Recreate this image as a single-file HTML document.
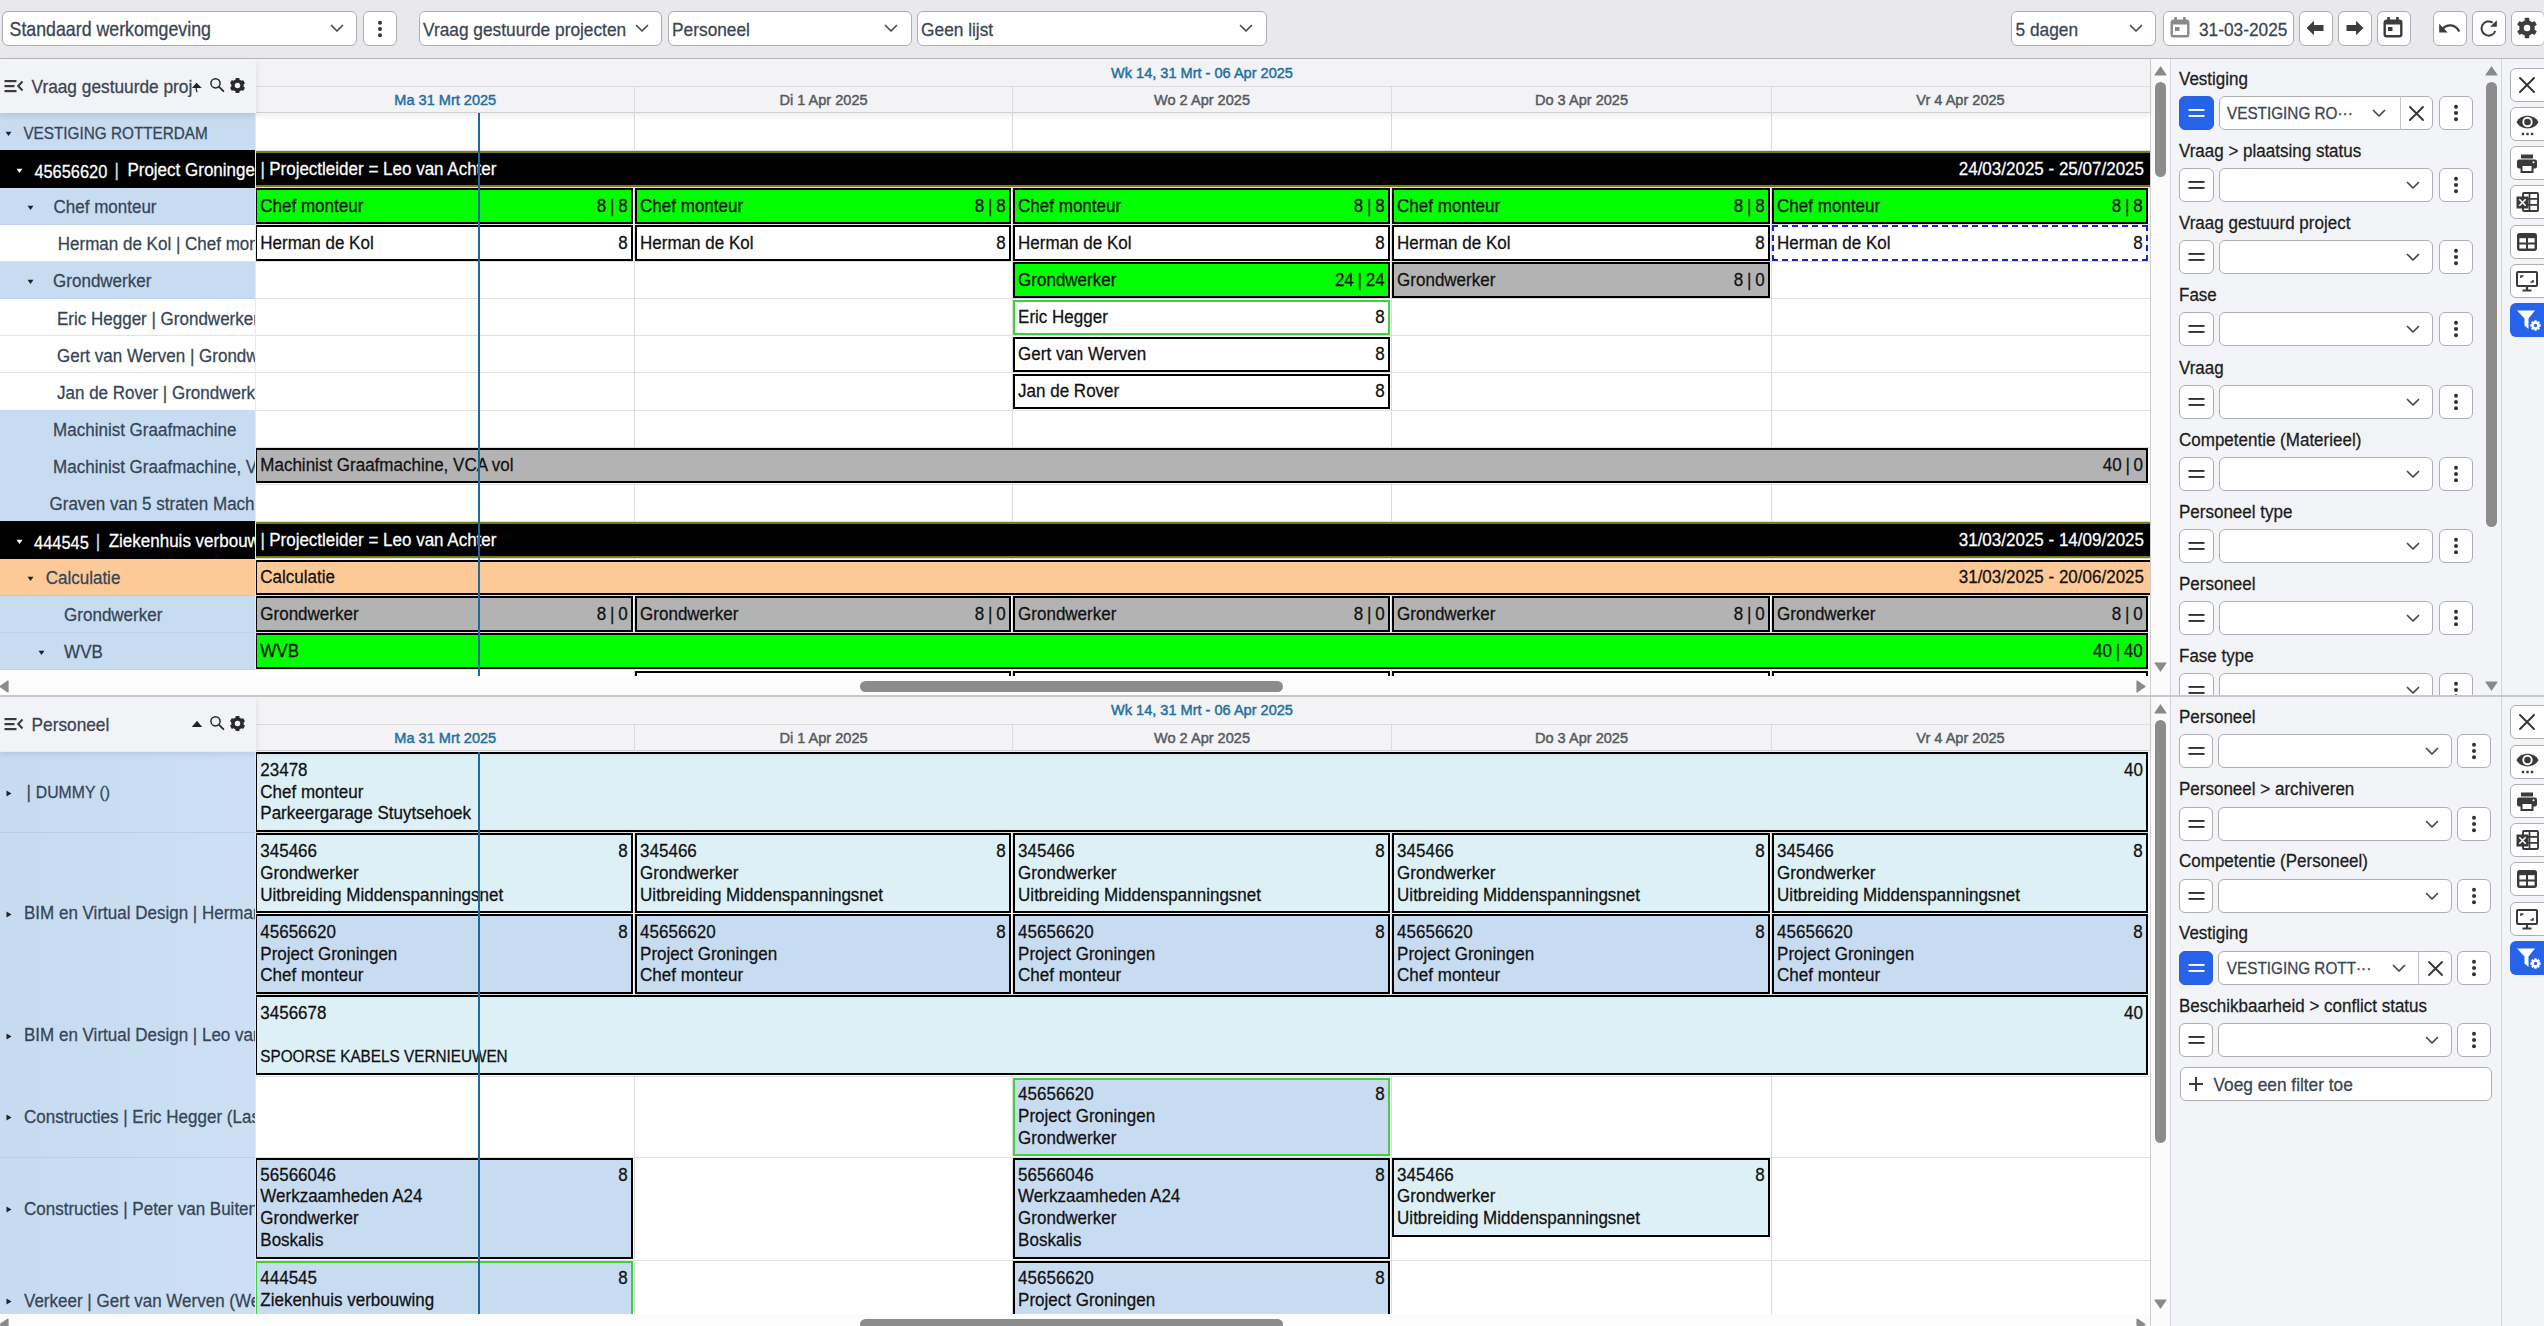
<!DOCTYPE html><html><head><meta charset="utf-8"><style>
html,body{margin:0;padding:0;width:2544px;height:1326px;overflow:hidden;background:#f3f4f7;font-family:"Liberation Sans",sans-serif;}
div{box-sizing:border-box;-webkit-text-stroke:0.25px currentColor}
</style></head><body><div style="position:relative;width:2544px;height:1326px;overflow:hidden">
<div style="position:absolute;left:0.00px;top:0.00px;width:2544.00px;height:58.80px;background:#e8e8ed;border-bottom:1px solid #b8b8bc"></div>
<div style="position:absolute;left:2.00px;top:11.20px;width:355.00px;height:34.40px;background:#fff;border:1px solid #aeaeb2;border-radius:6px;"></div><div style="position:absolute;left:9.60px;top:16.70px;height:24px;line-height:24px;font-size:17.75px;color:#3a4452;font-weight:normal;white-space:nowrap;transform:scaleY(1.09);">Standaard werkomgeving</div><svg style="position:absolute;left:329.50px;top:24.00px;" width="14" height="9" viewBox="0 0 14 9"><polyline points="1.5,1.5 7,7 12.5,1.5" fill="none" stroke="#4a4a4a" stroke-width="1.7" stroke-linecap="round" stroke-linejoin="round"/></svg>
<div style="position:absolute;left:362.50px;top:11.20px;width:34.00px;height:34.40px;background:#fff;border:1px solid #aeaeb2;border-radius:6px;"></div>
<svg style="position:absolute;left:376.50px;top:19.50px;" width="6" height="18" viewBox="0 0 6 18"><circle cx="3" cy="2.8" r="2.0" fill="#333"/><circle cx="3" cy="9" r="2.0" fill="#333"/><circle cx="3" cy="15.2" r="2.0" fill="#333"/></svg>
<div style="position:absolute;left:418.50px;top:11.20px;width:243.50px;height:34.40px;background:#fff;border:1px solid #aeaeb2;border-radius:6px;"></div><div style="position:absolute;left:423.10px;top:16.70px;height:24px;line-height:24px;font-size:17.3px;color:#3a4452;font-weight:normal;white-space:nowrap;transform:scaleY(1.09);">Vraag gestuurde projecten</div><svg style="position:absolute;left:635.00px;top:24.00px;" width="14" height="9" viewBox="0 0 14 9"><polyline points="1.5,1.5 7,7 12.5,1.5" fill="none" stroke="#4a4a4a" stroke-width="1.7" stroke-linecap="round" stroke-linejoin="round"/></svg>
<div style="position:absolute;left:667.50px;top:11.20px;width:244.00px;height:34.40px;background:#fff;border:1px solid #aeaeb2;border-radius:6px;"></div><div style="position:absolute;left:672.10px;top:16.70px;height:24px;line-height:24px;font-size:17.3px;color:#3a4452;font-weight:normal;white-space:nowrap;transform:scaleY(1.09);">Personeel</div><svg style="position:absolute;left:884.00px;top:24.00px;" width="14" height="9" viewBox="0 0 14 9"><polyline points="1.5,1.5 7,7 12.5,1.5" fill="none" stroke="#4a4a4a" stroke-width="1.7" stroke-linecap="round" stroke-linejoin="round"/></svg>
<div style="position:absolute;left:916.50px;top:11.20px;width:350.00px;height:34.40px;background:#fff;border:1px solid #aeaeb2;border-radius:6px;"></div><div style="position:absolute;left:921.10px;top:16.70px;height:24px;line-height:24px;font-size:17.3px;color:#3a4452;font-weight:normal;white-space:nowrap;transform:scaleY(1.09);">Geen lijst</div><svg style="position:absolute;left:1238.50px;top:24.00px;" width="14" height="9" viewBox="0 0 14 9"><polyline points="1.5,1.5 7,7 12.5,1.5" fill="none" stroke="#4a4a4a" stroke-width="1.7" stroke-linecap="round" stroke-linejoin="round"/></svg>
<div style="position:absolute;left:2011.00px;top:11.20px;width:145.00px;height:34.40px;background:#fff;border:1px solid #aeaeb2;border-radius:6px;"></div><div style="position:absolute;left:2015.60px;top:16.70px;height:24px;line-height:24px;font-size:17.3px;color:#3a4452;font-weight:normal;white-space:nowrap;transform:scaleY(1.09);">5 dagen</div><svg style="position:absolute;left:2128.50px;top:24.00px;" width="14" height="9" viewBox="0 0 14 9"><polyline points="1.5,1.5 7,7 12.5,1.5" fill="none" stroke="#4a4a4a" stroke-width="1.7" stroke-linecap="round" stroke-linejoin="round"/></svg>
<div style="position:absolute;left:2162.50px;top:11.20px;width:131.00px;height:34.40px;background:#fff;border:1px solid #aeaeb2;border-radius:6px;"></div>
<svg style="position:absolute;left:2170.00px;top:16.00px;" width="21" height="22" viewBox="0 0 21 22"><rect x="1.7" y="4.7" width="16.6" height="15.6" rx="2" fill="none" stroke="#8a8a8a" stroke-width="2.4"/><rect x="1.5" y="4.5" width="17" height="4" fill="#8a8a8a"/><rect x="4.3" y="1" width="2.6" height="4" fill="#8a8a8a"/><rect x="13.1" y="1" width="2.6" height="4" fill="#8a8a8a"/><rect x="5" y="11" width="4.5" height="4" fill="#8a8a8a"/></svg>
<div style="position:absolute;left:2199.00px;top:16.70px;height:24px;line-height:24px;font-size:17.3px;color:#3a4452;font-weight:normal;white-space:nowrap;transform:scaleY(1.09);">31-03-2025</div>
<div style="position:absolute;left:2298.50px;top:11.20px;width:34.00px;height:34.40px;background:#fff;border:1px solid #aeaeb2;border-radius:6px;"></div>
<div style="position:absolute;left:2337.50px;top:11.20px;width:34.00px;height:34.40px;background:#fff;border:1px solid #aeaeb2;border-radius:6px;"></div>
<div style="position:absolute;left:2376.50px;top:11.20px;width:34.00px;height:34.40px;background:#fff;border:1px solid #aeaeb2;border-radius:6px;"></div>
<div style="position:absolute;left:2432.50px;top:11.20px;width:34.00px;height:34.40px;background:#fff;border:1px solid #aeaeb2;border-radius:6px;"></div>
<div style="position:absolute;left:2471.50px;top:11.20px;width:34.00px;height:34.40px;background:#fff;border:1px solid #aeaeb2;border-radius:6px;"></div>
<div style="position:absolute;left:2510.50px;top:11.20px;width:34.00px;height:34.40px;background:#fff;border:1px solid #aeaeb2;border-radius:6px;"></div>
<svg style="position:absolute;left:2306.00px;top:20.00px;" width="18" height="16" viewBox="0 0 18 16"><path d="M0.5,8 L8,0.8 L8,5 L17.5,5 L17.5,11 L8,11 L8,15.2 Z" fill="#3d3d3d"/></svg>
<svg style="position:absolute;left:2346.00px;top:20.00px;" width="18" height="16" viewBox="0 0 18 16"><path d="M17.5,8 L10,0.8 L10,5 L0.5,5 L0.5,11 L10,11 L10,15.2 Z" fill="#3d3d3d"/></svg>
<svg style="position:absolute;left:2383.00px;top:16.00px;" width="21" height="22" viewBox="0 0 21 22"><rect x="1.7" y="4.7" width="16.6" height="15.6" rx="2" fill="none" stroke="#3d3d3d" stroke-width="2.4"/><rect x="1.5" y="4.5" width="17" height="4" fill="#3d3d3d"/><rect x="4.3" y="1" width="2.6" height="4" fill="#3d3d3d"/><rect x="13.1" y="1" width="2.6" height="4" fill="#3d3d3d"/><rect x="5" y="11" width="4.5" height="4" fill="#3d3d3d"/></svg>
<svg style="position:absolute;left:2436.00px;top:18.00px;" width="26" height="18" viewBox="0 0 26 18"><path d="M6.5,10.8 C10.5,6.2 19,5.5 23.3,13.5" fill="none" stroke="#3d3d3d" stroke-width="2.2"/><path d="M3.2,5.7 L3.2,14.6 L11.7,14.6 Z" fill="#3d3d3d"/></svg>
<svg style="position:absolute;left:2478.00px;top:17.00px;" width="22" height="22" viewBox="0 0 22 22"><path d="M17.3,14.0 A7.1,7.1 0 1 1 14.6,5.6" fill="none" stroke="#3d3d3d" stroke-width="2.0"/><path d="M18.8,3.3 L18.8,9.8 L12.1,9.8 Z" fill="#3d3d3d"/></svg>
<svg style="position:absolute;left:2515.30px;top:16.40px;" width="24" height="24" viewBox="0 0 24 24"><rect x="9.76" y="1.80" width="4.49" height="20.40" rx="0.82" fill="#3d3d3d" transform="rotate(0 12.00 12.00)"/><rect x="9.76" y="1.80" width="4.49" height="20.40" rx="0.82" fill="#3d3d3d" transform="rotate(60 12.00 12.00)"/><rect x="9.76" y="1.80" width="4.49" height="20.40" rx="0.82" fill="#3d3d3d" transform="rotate(120 12.00 12.00)"/><circle cx="12.00" cy="12.00" r="7.75" fill="#3d3d3d"/><circle cx="12.00" cy="12.00" r="3.26" fill="#fff"/></svg>
<div style="position:absolute;left:0.00px;top:58.50px;width:2544.00px;height:637.90px;background:#fff"></div>
<div style="position:absolute;left:0.00px;top:113.30px;width:255.20px;height:557.10px;overflow:hidden;z-index:2"><div style="position:absolute;left:0.00px;top:-113.30px;width:2544px;height:1326px"><div style="position:absolute;left:0.00px;top:113.30px;width:255.50px;height:37.60px;background:#c7dcf1;border-bottom:1px solid #bcd2e8"></div><svg style="position:absolute;left:5.30px;top:131.05px;" width="7" height="6" viewBox="0 0 7 6"><polygon points="0.5,0.8 6.5,0.8 3.5,5" fill="#222"/></svg><div style="position:absolute;left:23.40px;top:122.05px;height:24px;line-height:24px;font-size:15.3px;color:#354556;font-weight:normal;white-space:nowrap;transform:scaleY(1.09);">VESTIGING ROTTERDAM</div><div style="position:absolute;left:0.00px;top:150.40px;width:255.50px;height:37.60px;background:#000;border-bottom:1px solid #000"></div><svg style="position:absolute;left:15.80px;top:168.15px;" width="7" height="6" viewBox="0 0 7 6"><polygon points="0.5,0.8 6.5,0.8 3.5,5" fill="#fff"/></svg><div style="position:absolute;left:34.40px;top:159.15px;height:24px;line-height:24px;font-size:16.4px;color:#fff;font-weight:normal;white-space:nowrap;transform:scaleY(1.09);">45656620</div><div style="position:absolute;left:114.50px;top:159.15px;height:24px;line-height:24px;font-size:17px;color:#cfe9e9;font-weight:normal;white-space:nowrap;transform:scaleY(1.09);">|</div><div style="position:absolute;left:127.40px;top:159.15px;height:24px;line-height:24px;font-size:17px;color:#fff;font-weight:normal;white-space:nowrap;transform:scaleY(1.09);">Project Groningen</div><div style="position:absolute;left:0.00px;top:187.50px;width:255.50px;height:37.60px;background:#c7dcf1;border-bottom:1px solid #bcd2e8"></div><svg style="position:absolute;left:26.80px;top:205.25px;" width="7" height="6" viewBox="0 0 7 6"><polygon points="0.5,0.8 6.5,0.8 3.5,5" fill="#222"/></svg><div style="position:absolute;left:53.50px;top:196.25px;height:24px;line-height:24px;font-size:17px;color:#354556;font-weight:normal;white-space:nowrap;transform:scaleY(1.09);">Chef monteur</div><div style="position:absolute;left:0.00px;top:224.60px;width:255.50px;height:37.60px;background:#fff;border-bottom:1px solid #e2e2e2"></div><div style="position:absolute;left:57.80px;top:233.35px;height:24px;line-height:24px;font-size:17px;color:#354556;font-weight:normal;white-space:nowrap;transform:scaleY(1.09);">Herman de Kol | Chef monteur</div><div style="position:absolute;left:0.00px;top:261.70px;width:255.50px;height:37.60px;background:#c7dcf1;border-bottom:1px solid #bcd2e8"></div><svg style="position:absolute;left:26.80px;top:279.45px;" width="7" height="6" viewBox="0 0 7 6"><polygon points="0.5,0.8 6.5,0.8 3.5,5" fill="#222"/></svg><div style="position:absolute;left:53.10px;top:270.45px;height:24px;line-height:24px;font-size:17px;color:#354556;font-weight:normal;white-space:nowrap;transform:scaleY(1.09);">Grondwerker</div><div style="position:absolute;left:0.00px;top:298.80px;width:255.50px;height:37.60px;background:#fff;border-bottom:1px solid #e2e2e2"></div><div style="position:absolute;left:57.00px;top:307.55px;height:24px;line-height:24px;font-size:17px;color:#354556;font-weight:normal;white-space:nowrap;transform:scaleY(1.09);">Eric Hegger | Grondwerker</div><div style="position:absolute;left:0.00px;top:335.90px;width:255.50px;height:37.60px;background:#fff;border-bottom:1px solid #e2e2e2"></div><div style="position:absolute;left:57.00px;top:344.65px;height:24px;line-height:24px;font-size:17px;color:#354556;font-weight:normal;white-space:nowrap;transform:scaleY(1.09);">Gert van Werven | Grondwerker</div><div style="position:absolute;left:0.00px;top:373.00px;width:255.50px;height:37.60px;background:#fff;border-bottom:1px solid #e2e2e2"></div><div style="position:absolute;left:57.00px;top:381.75px;height:24px;line-height:24px;font-size:17px;color:#354556;font-weight:normal;white-space:nowrap;transform:scaleY(1.09);">Jan de Rover | Grondwerker</div><div style="position:absolute;left:0.00px;top:410.10px;width:255.50px;height:37.60px;background:#c7dcf1;border-bottom:1px solid #bcd2e8"></div><div style="position:absolute;left:53.10px;top:418.85px;height:24px;line-height:24px;font-size:17px;color:#354556;font-weight:normal;white-space:nowrap;transform:scaleY(1.09);">Machinist Graafmachine</div><div style="position:absolute;left:0.00px;top:447.20px;width:255.50px;height:37.60px;background:#c7dcf1;border-bottom:1px solid #bcd2e8"></div><div style="position:absolute;left:53.10px;top:455.95px;height:24px;line-height:24px;font-size:17px;color:#354556;font-weight:normal;white-space:nowrap;transform:scaleY(1.09);">Machinist Graafmachine, VCA vol</div><div style="position:absolute;left:0.00px;top:484.30px;width:255.50px;height:37.60px;background:#c7dcf1;border-bottom:1px solid #bcd2e8"></div><div style="position:absolute;left:49.50px;top:493.05px;height:24px;line-height:24px;font-size:17px;color:#354556;font-weight:normal;white-space:nowrap;transform:scaleY(1.09);">Graven van 5 straten Machinist</div><div style="position:absolute;left:0.00px;top:521.40px;width:255.50px;height:37.60px;background:#000;border-bottom:1px solid #000"></div><svg style="position:absolute;left:16.00px;top:539.15px;" width="7" height="6" viewBox="0 0 7 6"><polygon points="0.5,0.8 6.5,0.8 3.5,5" fill="#fff"/></svg><div style="position:absolute;left:34.10px;top:530.15px;height:24px;line-height:24px;font-size:16.4px;color:#fff;font-weight:normal;white-space:nowrap;transform:scaleY(1.09);">444545</div><div style="position:absolute;left:95.80px;top:530.15px;height:24px;line-height:24px;font-size:17px;color:#cfe9e9;font-weight:normal;white-space:nowrap;transform:scaleY(1.09);">|</div><div style="position:absolute;left:108.70px;top:530.15px;height:24px;line-height:24px;font-size:17px;color:#fff;font-weight:normal;white-space:nowrap;transform:scaleY(1.09);">Ziekenhuis verbouwing</div><div style="position:absolute;left:0.00px;top:558.50px;width:255.50px;height:37.60px;background:#fdc997;border-bottom:1px solid #f0bd8c"></div><svg style="position:absolute;left:27.00px;top:576.25px;" width="7" height="6" viewBox="0 0 7 6"><polygon points="0.5,0.8 6.5,0.8 3.5,5" fill="#222"/></svg><div style="position:absolute;left:45.70px;top:567.25px;height:24px;line-height:24px;font-size:17px;color:#354556;font-weight:normal;white-space:nowrap;transform:scaleY(1.09);">Calculatie</div><div style="position:absolute;left:0.00px;top:595.60px;width:255.50px;height:37.60px;background:#c7dcf1;border-bottom:1px solid #bcd2e8"></div><div style="position:absolute;left:64.10px;top:604.35px;height:24px;line-height:24px;font-size:17px;color:#354556;font-weight:normal;white-space:nowrap;transform:scaleY(1.09);">Grondwerker</div><div style="position:absolute;left:0.00px;top:632.70px;width:255.50px;height:37.60px;background:#c7dcf1;border-bottom:1px solid #bcd2e8"></div><svg style="position:absolute;left:38.00px;top:650.45px;" width="7" height="6" viewBox="0 0 7 6"><polygon points="0.5,0.8 6.5,0.8 3.5,5" fill="#222"/></svg><div style="position:absolute;left:64.10px;top:641.45px;height:24px;line-height:24px;font-size:17px;color:#354556;font-weight:normal;white-space:nowrap;transform:scaleY(1.09);">WVB</div></div></div>
<div style="position:absolute;left:0.00px;top:670.40px;width:256.00px;height:26.00px;background:#fcfcfd"></div>
<div style="position:absolute;left:256.00px;top:113.30px;width:1893.50px;height:562.30px;overflow:hidden;background:#fff"><div style="position:absolute;left:0.00px;top:36.60px;width:1893.50px;height:1.00px;background:#e0e0e0"></div><div style="position:absolute;left:0.00px;top:73.70px;width:1893.50px;height:1.00px;background:#e0e0e0"></div><div style="position:absolute;left:0.00px;top:110.80px;width:1893.50px;height:1.00px;background:#e0e0e0"></div><div style="position:absolute;left:0.00px;top:147.90px;width:1893.50px;height:1.00px;background:#e0e0e0"></div><div style="position:absolute;left:0.00px;top:185.00px;width:1893.50px;height:1.00px;background:#e0e0e0"></div><div style="position:absolute;left:0.00px;top:222.10px;width:1893.50px;height:1.00px;background:#e0e0e0"></div><div style="position:absolute;left:0.00px;top:259.20px;width:1893.50px;height:1.00px;background:#e0e0e0"></div><div style="position:absolute;left:0.00px;top:296.30px;width:1893.50px;height:1.00px;background:#e0e0e0"></div><div style="position:absolute;left:0.00px;top:333.40px;width:1893.50px;height:1.00px;background:#e0e0e0"></div><div style="position:absolute;left:0.00px;top:370.50px;width:1893.50px;height:1.00px;background:#e0e0e0"></div><div style="position:absolute;left:0.00px;top:407.60px;width:1893.50px;height:1.00px;background:#e0e0e0"></div><div style="position:absolute;left:0.00px;top:444.70px;width:1893.50px;height:1.00px;background:#e0e0e0"></div><div style="position:absolute;left:0.00px;top:481.80px;width:1893.50px;height:1.00px;background:#e0e0e0"></div><div style="position:absolute;left:0.00px;top:518.90px;width:1893.50px;height:1.00px;background:#e0e0e0"></div><div style="position:absolute;left:0.00px;top:556.00px;width:1893.50px;height:1.00px;background:#e0e0e0"></div><div style="position:absolute;left:378.00px;top:0.00px;width:1.00px;height:562.30px;background:#dcdcdc"></div><div style="position:absolute;left:756.00px;top:0.00px;width:1.00px;height:562.30px;background:#dcdcdc"></div><div style="position:absolute;left:1135.00px;top:0.00px;width:1.00px;height:562.30px;background:#dcdcdc"></div><div style="position:absolute;left:1515.00px;top:0.00px;width:1.00px;height:562.30px;background:#dcdcdc"></div><div style="position:absolute;left:0.00px;top:37.35px;width:1895.50px;height:36.60px;background:#000;border-top:2.2px solid #7c7a20;border-bottom:2.2px solid #7c7a20"></div><div style="position:absolute;left:4.50px;top:44.45px;height:24px;line-height:24px;font-size:17px;color:#e8f0f0;font-weight:normal;white-space:nowrap;transform:scaleY(1.09);">|</div><div style="position:absolute;left:13.20px;top:44.45px;height:24px;line-height:24px;font-size:17px;color:#fff;font-weight:normal;white-space:nowrap;transform:scaleY(1.09);">Projectleider = Leo van Achter</div><div style="position:absolute;left:1488.00px;width:400px;text-align:right;top:44.45px;height:24px;line-height:24px;font-size:17px;color:#fff;white-space:nowrap;transform:scaleY(1.09);">24/03/2025 - 25/07/2025</div><div style="position:absolute;left:0.00px;top:408.35px;width:1895.50px;height:36.60px;background:#000;border-top:2.2px solid #7c7a20;border-bottom:2.2px solid #7c7a20"></div><div style="position:absolute;left:4.50px;top:415.45px;height:24px;line-height:24px;font-size:17px;color:#e8f0f0;font-weight:normal;white-space:nowrap;transform:scaleY(1.09);">|</div><div style="position:absolute;left:13.20px;top:415.45px;height:24px;line-height:24px;font-size:17px;color:#fff;font-weight:normal;white-space:nowrap;transform:scaleY(1.09);">Projectleider = Leo van Achter</div><div style="position:absolute;left:1488.00px;width:400px;text-align:right;top:415.45px;height:24px;line-height:24px;font-size:17px;color:#fff;white-space:nowrap;transform:scaleY(1.09);">31/03/2025 - 14/09/2025</div><div style="position:absolute;left:-0.70px;top:75.00px;width:377.30px;height:35.50px;background:#00ff00;border:2px solid #000;overflow:hidden;"></div><div style="position:absolute;left:4.30px;top:81.25px;height:24px;line-height:24px;font-size:17px;color:#111;font-weight:normal;white-space:nowrap;transform:scaleY(1.09);">Chef monteur</div><div style="position:absolute;left:-28.40px;width:400px;text-align:right;top:81.25px;height:24px;line-height:24px;font-size:17px;color:#111;white-space:nowrap;transform:scaleY(1.09);word-spacing:-1.0px;">8 | 8</div><div style="position:absolute;left:-0.70px;top:112.10px;width:377.30px;height:35.50px;background:#fff;border:2px solid #000;overflow:hidden;"></div><div style="position:absolute;left:4.30px;top:118.35px;height:24px;line-height:24px;font-size:17px;color:#111;font-weight:normal;white-space:nowrap;transform:scaleY(1.09);">Herman de Kol</div><div style="position:absolute;left:-28.40px;width:400px;text-align:right;top:118.35px;height:24px;line-height:24px;font-size:17px;color:#111;white-space:nowrap;transform:scaleY(1.09);">8</div><div style="position:absolute;left:-0.70px;top:483.10px;width:377.30px;height:35.50px;background:#b3b3b3;border:2px solid #000;overflow:hidden;"></div><div style="position:absolute;left:4.30px;top:489.35px;height:24px;line-height:24px;font-size:17px;color:#111;font-weight:normal;white-space:nowrap;transform:scaleY(1.09);">Grondwerker</div><div style="position:absolute;left:-28.40px;width:400px;text-align:right;top:489.35px;height:24px;line-height:24px;font-size:17px;color:#111;white-space:nowrap;transform:scaleY(1.09);word-spacing:-1.0px;">8 | 0</div><div style="position:absolute;left:379.10px;top:75.00px;width:375.50px;height:35.50px;background:#00ff00;border:2px solid #000;overflow:hidden;"></div><div style="position:absolute;left:384.10px;top:81.25px;height:24px;line-height:24px;font-size:17px;color:#111;font-weight:normal;white-space:nowrap;transform:scaleY(1.09);">Chef monteur</div><div style="position:absolute;left:349.60px;width:400px;text-align:right;top:81.25px;height:24px;line-height:24px;font-size:17px;color:#111;white-space:nowrap;transform:scaleY(1.09);word-spacing:-1.0px;">8 | 8</div><div style="position:absolute;left:379.10px;top:112.10px;width:375.50px;height:35.50px;background:#fff;border:2px solid #000;overflow:hidden;"></div><div style="position:absolute;left:384.10px;top:118.35px;height:24px;line-height:24px;font-size:17px;color:#111;font-weight:normal;white-space:nowrap;transform:scaleY(1.09);">Herman de Kol</div><div style="position:absolute;left:349.60px;width:400px;text-align:right;top:118.35px;height:24px;line-height:24px;font-size:17px;color:#111;white-space:nowrap;transform:scaleY(1.09);">8</div><div style="position:absolute;left:379.10px;top:483.10px;width:375.50px;height:35.50px;background:#b3b3b3;border:2px solid #000;overflow:hidden;"></div><div style="position:absolute;left:384.10px;top:489.35px;height:24px;line-height:24px;font-size:17px;color:#111;font-weight:normal;white-space:nowrap;transform:scaleY(1.09);">Grondwerker</div><div style="position:absolute;left:349.60px;width:400px;text-align:right;top:489.35px;height:24px;line-height:24px;font-size:17px;color:#111;white-space:nowrap;transform:scaleY(1.09);word-spacing:-1.0px;">8 | 0</div><div style="position:absolute;left:757.10px;top:75.00px;width:376.50px;height:35.50px;background:#00ff00;border:2px solid #000;overflow:hidden;"></div><div style="position:absolute;left:762.10px;top:81.25px;height:24px;line-height:24px;font-size:17px;color:#111;font-weight:normal;white-space:nowrap;transform:scaleY(1.09);">Chef monteur</div><div style="position:absolute;left:728.60px;width:400px;text-align:right;top:81.25px;height:24px;line-height:24px;font-size:17px;color:#111;white-space:nowrap;transform:scaleY(1.09);word-spacing:-1.0px;">8 | 8</div><div style="position:absolute;left:757.10px;top:112.10px;width:376.50px;height:35.50px;background:#fff;border:2px solid #000;overflow:hidden;"></div><div style="position:absolute;left:762.10px;top:118.35px;height:24px;line-height:24px;font-size:17px;color:#111;font-weight:normal;white-space:nowrap;transform:scaleY(1.09);">Herman de Kol</div><div style="position:absolute;left:728.60px;width:400px;text-align:right;top:118.35px;height:24px;line-height:24px;font-size:17px;color:#111;white-space:nowrap;transform:scaleY(1.09);">8</div><div style="position:absolute;left:757.10px;top:483.10px;width:376.50px;height:35.50px;background:#b3b3b3;border:2px solid #000;overflow:hidden;"></div><div style="position:absolute;left:762.10px;top:489.35px;height:24px;line-height:24px;font-size:17px;color:#111;font-weight:normal;white-space:nowrap;transform:scaleY(1.09);">Grondwerker</div><div style="position:absolute;left:728.60px;width:400px;text-align:right;top:489.35px;height:24px;line-height:24px;font-size:17px;color:#111;white-space:nowrap;transform:scaleY(1.09);word-spacing:-1.0px;">8 | 0</div><div style="position:absolute;left:1136.10px;top:75.00px;width:377.50px;height:35.50px;background:#00ff00;border:2px solid #000;overflow:hidden;"></div><div style="position:absolute;left:1141.10px;top:81.25px;height:24px;line-height:24px;font-size:17px;color:#111;font-weight:normal;white-space:nowrap;transform:scaleY(1.09);">Chef monteur</div><div style="position:absolute;left:1108.60px;width:400px;text-align:right;top:81.25px;height:24px;line-height:24px;font-size:17px;color:#111;white-space:nowrap;transform:scaleY(1.09);word-spacing:-1.0px;">8 | 8</div><div style="position:absolute;left:1136.10px;top:112.10px;width:377.50px;height:35.50px;background:#fff;border:2px solid #000;overflow:hidden;"></div><div style="position:absolute;left:1141.10px;top:118.35px;height:24px;line-height:24px;font-size:17px;color:#111;font-weight:normal;white-space:nowrap;transform:scaleY(1.09);">Herman de Kol</div><div style="position:absolute;left:1108.60px;width:400px;text-align:right;top:118.35px;height:24px;line-height:24px;font-size:17px;color:#111;white-space:nowrap;transform:scaleY(1.09);">8</div><div style="position:absolute;left:1136.10px;top:483.10px;width:377.50px;height:35.50px;background:#b3b3b3;border:2px solid #000;overflow:hidden;"></div><div style="position:absolute;left:1141.10px;top:489.35px;height:24px;line-height:24px;font-size:17px;color:#111;font-weight:normal;white-space:nowrap;transform:scaleY(1.09);">Grondwerker</div><div style="position:absolute;left:1108.60px;width:400px;text-align:right;top:489.35px;height:24px;line-height:24px;font-size:17px;color:#111;white-space:nowrap;transform:scaleY(1.09);word-spacing:-1.0px;">8 | 0</div><div style="position:absolute;left:1516.10px;top:75.00px;width:375.50px;height:35.50px;background:#00ff00;border:2px solid #000;overflow:hidden;"></div><div style="position:absolute;left:1521.10px;top:81.25px;height:24px;line-height:24px;font-size:17px;color:#111;font-weight:normal;white-space:nowrap;transform:scaleY(1.09);">Chef monteur</div><div style="position:absolute;left:1486.60px;width:400px;text-align:right;top:81.25px;height:24px;line-height:24px;font-size:17px;color:#111;white-space:nowrap;transform:scaleY(1.09);word-spacing:-1.0px;">8 | 8</div><div style="position:absolute;left:1516.10px;top:112.10px;width:375.50px;height:35.50px;background:#fff;border:2.5px dashed #1f1fd0;overflow:hidden;"></div><div style="position:absolute;left:1521.10px;top:118.35px;height:24px;line-height:24px;font-size:17px;color:#111;font-weight:normal;white-space:nowrap;transform:scaleY(1.09);">Herman de Kol</div><div style="position:absolute;left:1486.60px;width:400px;text-align:right;top:118.35px;height:24px;line-height:24px;font-size:17px;color:#111;white-space:nowrap;transform:scaleY(1.09);">8</div><div style="position:absolute;left:1516.10px;top:483.10px;width:375.50px;height:35.50px;background:#b3b3b3;border:2px solid #000;overflow:hidden;"></div><div style="position:absolute;left:1521.10px;top:489.35px;height:24px;line-height:24px;font-size:17px;color:#111;font-weight:normal;white-space:nowrap;transform:scaleY(1.09);">Grondwerker</div><div style="position:absolute;left:1486.60px;width:400px;text-align:right;top:489.35px;height:24px;line-height:24px;font-size:17px;color:#111;white-space:nowrap;transform:scaleY(1.09);word-spacing:-1.0px;">8 | 0</div><div style="position:absolute;left:757.10px;top:149.20px;width:376.50px;height:35.50px;background:#00ff00;border:2px solid #000;overflow:hidden;"></div><div style="position:absolute;left:762.10px;top:155.45px;height:24px;line-height:24px;font-size:17px;color:#111;font-weight:normal;white-space:nowrap;transform:scaleY(1.09);">Grondwerker</div><div style="position:absolute;left:728.60px;width:400px;text-align:right;top:155.45px;height:24px;line-height:24px;font-size:17px;color:#111;white-space:nowrap;transform:scaleY(1.09);word-spacing:-1.0px;">24 | 24</div><div style="position:absolute;left:1136.10px;top:149.20px;width:377.50px;height:35.50px;background:#b3b3b3;border:2px solid #000;overflow:hidden;"></div><div style="position:absolute;left:1141.10px;top:155.45px;height:24px;line-height:24px;font-size:17px;color:#111;font-weight:normal;white-space:nowrap;transform:scaleY(1.09);">Grondwerker</div><div style="position:absolute;left:1108.60px;width:400px;text-align:right;top:155.45px;height:24px;line-height:24px;font-size:17px;color:#111;white-space:nowrap;transform:scaleY(1.09);word-spacing:-1.0px;">8 | 0</div><div style="position:absolute;left:757.10px;top:186.30px;width:376.50px;height:35.50px;background:#fff;border:2px solid #3ad43a;overflow:hidden;"></div><div style="position:absolute;left:762.10px;top:192.55px;height:24px;line-height:24px;font-size:17px;color:#111;font-weight:normal;white-space:nowrap;transform:scaleY(1.09);">Eric Hegger</div><div style="position:absolute;left:728.60px;width:400px;text-align:right;top:192.55px;height:24px;line-height:24px;font-size:17px;color:#111;white-space:nowrap;transform:scaleY(1.09);">8</div><div style="position:absolute;left:757.10px;top:223.40px;width:376.50px;height:35.50px;background:#fff;border:2px solid #000;overflow:hidden;"></div><div style="position:absolute;left:762.10px;top:229.65px;height:24px;line-height:24px;font-size:17px;color:#111;font-weight:normal;white-space:nowrap;transform:scaleY(1.09);">Gert van Werven</div><div style="position:absolute;left:728.60px;width:400px;text-align:right;top:229.65px;height:24px;line-height:24px;font-size:17px;color:#111;white-space:nowrap;transform:scaleY(1.09);">8</div><div style="position:absolute;left:757.10px;top:260.50px;width:376.50px;height:35.50px;background:#fff;border:2px solid #000;overflow:hidden;"></div><div style="position:absolute;left:762.10px;top:266.75px;height:24px;line-height:24px;font-size:17px;color:#111;font-weight:normal;white-space:nowrap;transform:scaleY(1.09);">Jan de Rover</div><div style="position:absolute;left:728.60px;width:400px;text-align:right;top:266.75px;height:24px;line-height:24px;font-size:17px;color:#111;white-space:nowrap;transform:scaleY(1.09);">8</div><div style="position:absolute;left:-0.70px;top:334.70px;width:1892.70px;height:35.50px;background:#b3b3b3;border:2px solid #000;overflow:hidden;"></div><div style="position:absolute;left:4.30px;top:340.95px;height:24px;line-height:24px;font-size:17px;color:#111;font-weight:normal;white-space:nowrap;transform:scaleY(1.09);">Machinist Graafmachine, VCA vol</div><div style="position:absolute;left:1487.00px;width:400px;text-align:right;top:340.95px;height:24px;line-height:24px;font-size:17px;color:#111;white-space:nowrap;transform:scaleY(1.09);word-spacing:-1.0px;">40 | 0</div><div style="position:absolute;left:-0.70px;top:446.70px;width:1897.20px;height:34.80px;background:#fdc997;border:2px solid #000;overflow:hidden;"></div><div style="position:absolute;left:4.30px;top:452.60px;height:24px;line-height:24px;font-size:17px;color:#111;font-weight:normal;white-space:nowrap;transform:scaleY(1.09);">Calculatie</div><div style="position:absolute;left:1488.00px;width:400px;text-align:right;top:452.55px;height:24px;line-height:24px;font-size:17px;color:#111;white-space:nowrap;transform:scaleY(1.09);">31/03/2025 - 20/06/2025</div><div style="position:absolute;left:-0.70px;top:520.20px;width:1892.40px;height:35.50px;background:#00ff00;border:2px solid #000;overflow:hidden;"></div><div style="position:absolute;left:4.30px;top:526.45px;height:24px;line-height:24px;font-size:17px;color:#111;font-weight:normal;white-space:nowrap;transform:scaleY(1.09);">WVB</div><div style="position:absolute;left:1486.70px;width:400px;text-align:right;top:526.45px;height:24px;line-height:24px;font-size:17px;color:#111;white-space:nowrap;transform:scaleY(1.09);word-spacing:-1.0px;">40 | 40</div><div style="position:absolute;left:379.10px;top:557.50px;width:375.50px;height:35.00px;background:#fff;border:2px solid #000;overflow:hidden;"></div><div style="position:absolute;left:757.10px;top:557.50px;width:376.50px;height:35.00px;background:#fff;border:2px solid #000;overflow:hidden;"></div><div style="position:absolute;left:1136.10px;top:557.50px;width:377.50px;height:35.00px;background:#fff;border:2px solid #000;overflow:hidden;"></div><div style="position:absolute;left:1516.10px;top:557.50px;width:375.50px;height:35.00px;background:#fff;border:2px solid #000;overflow:hidden;"></div><div style="position:absolute;left:222.20px;top:0.00px;width:2.20px;height:562.30px;background:#1b6aa0"></div></div>
<div style="position:absolute;left:0;top:0;width:0;height:0;z-index:1"><div style="position:absolute;left:256.00px;top:58.50px;width:1893.50px;height:54.80px;background:#f3f3f6;border-bottom:1px solid #d0d0d4;box-shadow:0 3px 6px rgba(0,0,0,0.07)"></div><div style="position:absolute;left:256.00px;top:85.90px;width:1893.50px;height:1.00px;background:#dcdcdf"></div><div style="position:absolute;left:1002.00px;width:400px;text-align:center;top:60.50px;height:24px;line-height:24px;font-size:14.55px;color:#1e6fa3;font-weight:normal;-webkit-text-stroke:0.45px #1e6fa3;white-space:nowrap">Wk 14, 31 Mrt - 06 Apr 2025</div><div style="position:absolute;left:245.25px;width:400px;text-align:center;top:88.30px;height:24px;line-height:24px;font-size:14.55px;color:#1e6fa3;font-weight:normal;-webkit-text-stroke:0.45px #1e6fa3;white-space:nowrap">Ma 31 Mrt 2025</div><div style="position:absolute;left:623.50px;width:400px;text-align:center;top:88.30px;height:24px;line-height:24px;font-size:14.55px;color:#555a60;font-weight:normal;-webkit-text-stroke:0.45px #555a60;white-space:nowrap">Di 1 Apr 2025</div><div style="position:absolute;left:634.00px;top:86.50px;width:1.00px;height:27.00px;background:#dcdcdf"></div><div style="position:absolute;left:1002.00px;width:400px;text-align:center;top:88.30px;height:24px;line-height:24px;font-size:14.55px;color:#555a60;font-weight:normal;-webkit-text-stroke:0.45px #555a60;white-space:nowrap">Wo 2 Apr 2025</div><div style="position:absolute;left:1012.00px;top:86.50px;width:1.00px;height:27.00px;background:#dcdcdf"></div><div style="position:absolute;left:1381.50px;width:400px;text-align:center;top:88.30px;height:24px;line-height:24px;font-size:14.55px;color:#555a60;font-weight:normal;-webkit-text-stroke:0.45px #555a60;white-space:nowrap">Do 3 Apr 2025</div><div style="position:absolute;left:1391.00px;top:86.50px;width:1.00px;height:27.00px;background:#dcdcdf"></div><div style="position:absolute;left:1760.50px;width:400px;text-align:center;top:88.30px;height:24px;line-height:24px;font-size:14.55px;color:#555a60;font-weight:normal;-webkit-text-stroke:0.45px #555a60;white-space:nowrap">Vr 4 Apr 2025</div><div style="position:absolute;left:1771.00px;top:86.50px;width:1.00px;height:27.00px;background:#dcdcdf"></div></div>
<div style="position:absolute;left:0.00px;top:58.50px;width:255.50px;height:54.80px;background:#f2f3f6;box-shadow:0 3px 6px rgba(0,0,0,0.10);z-index:3"></div><svg style="position:absolute;left:3.50px;top:79.00px;z-index:4;" width="20" height="14" viewBox="0 0 20 14"><rect x="0.5" y="1" width="12" height="2.2" fill="#3a3a3a"/><rect x="0.5" y="6" width="10" height="2.2" fill="#3a3a3a"/><rect x="0.5" y="11" width="12" height="2.2" fill="#3a3a3a"/><polyline points="18.5,2.5 14.2,7 18.5,11.5" fill="none" stroke="#3a3a3a" stroke-width="2"/></svg><div style="position:absolute;left:31.50px;top:74.00px;height:24px;line-height:24px;font-size:17.3px;color:#3a4452;font-weight:normal;white-space:nowrap;transform:scaleY(1.09);z-index:4">Vraag gestuurde proj</div><svg style="position:absolute;left:209.00px;top:77.00px;z-index:4;" width="16" height="16" viewBox="0 0 16 16"><circle cx="6.5" cy="6.3" r="4.6" fill="none" stroke="#2a2a2a" stroke-width="1.5"/><path d="M9.8,9.6 L14.4,14.2" stroke="#2a2a2a" stroke-width="1.8" stroke-linecap="round"/></svg><svg style="position:absolute;left:228.00px;top:76.00px;z-index:4;" width="19" height="19" viewBox="0 0 19 19"><rect x="7.60" y="1.90" width="3.80" height="15.20" rx="0.61" fill="#2a2a2a" transform="rotate(0 9.50 9.50)"/><rect x="7.60" y="1.90" width="3.80" height="15.20" rx="0.61" fill="#2a2a2a" transform="rotate(60 9.50 9.50)"/><rect x="7.60" y="1.90" width="3.80" height="15.20" rx="0.61" fill="#2a2a2a" transform="rotate(120 9.50 9.50)"/><circle cx="9.50" cy="9.50" r="6.23" fill="#2a2a2a"/><circle cx="9.50" cy="9.50" r="2.74" fill="#f2f3f6"/></svg>
<svg style="position:absolute;left:191.00px;top:82.00px;z-index:5;" width="12" height="11" viewBox="0 0 12 11"><path d="M5.4,0.8 L10.8,6 L1,6 Z" fill="#222"/><path d="M5.2,5.5 C5.0,7.5 5.4,8.8 6.0,10.2" fill="none" stroke="#222" stroke-width="1.2"/></svg>
<div style="position:absolute;left:255.20px;top:113.30px;width:1.00px;height:557.10px;background:#e6eaee;z-index:2"></div>
<div style="position:absolute;left:0.00px;top:675.60px;width:2149.50px;height:20.80px;background:#fcfcfd"></div><svg style="position:absolute;left:-0.80px;top:680.30px;" width="10" height="13" viewBox="0 0 10 13"><polygon points="9,1 1,6.5 9,12" fill="#8a8a8a" stroke="#8a8a8a" stroke-width="1.2" stroke-linejoin="round"/></svg><svg style="position:absolute;left:2135.50px;top:680.30px;" width="10" height="13" viewBox="0 0 10 13"><polygon points="1,1 9,6.5 1,12" fill="#8a8a8a" stroke="#8a8a8a" stroke-width="1.2" stroke-linejoin="round"/></svg><div style="position:absolute;left:860.30px;top:681.20px;width:422.60px;height:10.60px;background:#8c8c8c;border-radius:6px"></div>
<div style="position:absolute;left:2149.50px;top:58.50px;width:21.00px;height:637.90px;background:#fbfbfc;border-left:1px solid #d0d0d4;border-right:1px solid #d6d6da"></div><svg style="position:absolute;left:2154.00px;top:66.00px;" width="13" height="10" viewBox="0 0 13 10"><polygon points="6.5,1 12,9 1,9" fill="#8a8a8a" stroke="#8a8a8a" stroke-width="1.2" stroke-linejoin="round"/></svg><svg style="position:absolute;left:2154.00px;top:661.50px;" width="13" height="10" viewBox="0 0 13 10"><polygon points="1,1 12,1 6.5,9" fill="#8a8a8a" stroke="#8a8a8a" stroke-width="1.2" stroke-linejoin="round"/></svg><div style="position:absolute;left:2155.00px;top:82.30px;width:11.00px;height:94.90px;background:#8c8c8c;border-radius:6px"></div>
<div style="position:absolute;left:2170.50px;top:58.50px;width:331.00px;height:637.90px;background:#f3f4f7;overflow:hidden;border-right:1px solid #d4d4d8"></div>
<div style="position:absolute;left:2170.50px;top:58.50px;width:330.00px;height:637.90px;overflow:hidden;"><div style="position:absolute;left:-2170.50px;top:-58.50px;width:2544px;height:1326px"><div style="position:absolute;left:2179.00px;top:68.00px;height:24px;line-height:24px;font-size:17px;color:#1c1c1c;font-weight:normal;white-space:nowrap;transform:scaleY(1.09);">Vestiging</div><div style="position:absolute;left:2179.00px;top:96.00px;width:34.50px;height:34.00px;background:#2563eb;border:1px solid #2a5fd6;border-radius:6px"></div><svg style="position:absolute;left:2188.00px;top:108.00px;" width="17" height="10" viewBox="0 0 17 10"><rect x="0.5" y="1.0" width="16" height="1.9" fill="#fff"/><rect x="0.5" y="7.0" width="16" height="1.9" fill="#fff"/></svg><div style="position:absolute;left:2218.50px;top:96.00px;width:214.50px;height:34.00px;background:#fff;border:1px solid #aeaeb2;border-radius:6px;"></div><div style="position:absolute;left:2227.00px;top:101.50px;height:24px;line-height:24px;font-size:15.3px;color:#3a4452;font-weight:normal;white-space:nowrap;transform:scaleY(1.09);">VESTIGING RO···</div><div style="position:absolute;left:2399.50px;top:96.00px;width:1.00px;height:34.00px;background:#c4c4c8"></div><svg style="position:absolute;left:2372.00px;top:109.00px;" width="14" height="9" viewBox="0 0 14 9"><polyline points="1.5,1.5 7,7 12.5,1.5" fill="none" stroke="#444" stroke-width="1.7" stroke-linecap="round" stroke-linejoin="round"/></svg><svg style="position:absolute;left:2409.00px;top:106.00px;" width="15" height="15" viewBox="0 0 15 15"><path d="M1,1 L14,14 M14,1 L1,14" stroke="#333" stroke-width="1.8" stroke-linecap="round"/></svg><div style="position:absolute;left:2438.50px;top:96.00px;width:34.00px;height:34.00px;background:#fff;border:1px solid #aeaeb2;border-radius:6px;"></div><svg style="position:absolute;left:2452.50px;top:104.00px;" width="6" height="18" viewBox="0 0 6 18"><circle cx="3" cy="2.8" r="2.0" fill="#333"/><circle cx="3" cy="9" r="2.0" fill="#333"/><circle cx="3" cy="15.2" r="2.0" fill="#333"/></svg><div style="position:absolute;left:2179.00px;top:140.15px;height:24px;line-height:24px;font-size:17px;color:#1c1c1c;font-weight:normal;white-space:nowrap;transform:scaleY(1.09);">Vraag &gt; plaatsing status</div><div style="position:absolute;left:2179.00px;top:168.15px;width:34.50px;height:34.00px;background:#fff;border:1px solid #aeaeb2;border-radius:6px;"></div><svg style="position:absolute;left:2188.00px;top:180.15px;" width="17" height="10" viewBox="0 0 17 10"><rect x="0.5" y="1.0" width="16" height="1.9" fill="#333"/><rect x="0.5" y="7.0" width="16" height="1.9" fill="#333"/></svg><div style="position:absolute;left:2218.50px;top:168.15px;width:214.50px;height:34.00px;background:#fff;border:1px solid #aeaeb2;border-radius:6px;"></div><svg style="position:absolute;left:2405.50px;top:181.15px;" width="14" height="9" viewBox="0 0 14 9"><polyline points="1.5,1.5 7,7 12.5,1.5" fill="none" stroke="#444" stroke-width="1.7" stroke-linecap="round" stroke-linejoin="round"/></svg><div style="position:absolute;left:2438.50px;top:168.15px;width:34.00px;height:34.00px;background:#fff;border:1px solid #aeaeb2;border-radius:6px;"></div><svg style="position:absolute;left:2452.50px;top:176.15px;" width="6" height="18" viewBox="0 0 6 18"><circle cx="3" cy="2.8" r="2.0" fill="#333"/><circle cx="3" cy="9" r="2.0" fill="#333"/><circle cx="3" cy="15.2" r="2.0" fill="#333"/></svg><div style="position:absolute;left:2179.00px;top:212.30px;height:24px;line-height:24px;font-size:17px;color:#1c1c1c;font-weight:normal;white-space:nowrap;transform:scaleY(1.09);">Vraag gestuurd project</div><div style="position:absolute;left:2179.00px;top:240.30px;width:34.50px;height:34.00px;background:#fff;border:1px solid #aeaeb2;border-radius:6px;"></div><svg style="position:absolute;left:2188.00px;top:252.30px;" width="17" height="10" viewBox="0 0 17 10"><rect x="0.5" y="1.0" width="16" height="1.9" fill="#333"/><rect x="0.5" y="7.0" width="16" height="1.9" fill="#333"/></svg><div style="position:absolute;left:2218.50px;top:240.30px;width:214.50px;height:34.00px;background:#fff;border:1px solid #aeaeb2;border-radius:6px;"></div><svg style="position:absolute;left:2405.50px;top:253.30px;" width="14" height="9" viewBox="0 0 14 9"><polyline points="1.5,1.5 7,7 12.5,1.5" fill="none" stroke="#444" stroke-width="1.7" stroke-linecap="round" stroke-linejoin="round"/></svg><div style="position:absolute;left:2438.50px;top:240.30px;width:34.00px;height:34.00px;background:#fff;border:1px solid #aeaeb2;border-radius:6px;"></div><svg style="position:absolute;left:2452.50px;top:248.30px;" width="6" height="18" viewBox="0 0 6 18"><circle cx="3" cy="2.8" r="2.0" fill="#333"/><circle cx="3" cy="9" r="2.0" fill="#333"/><circle cx="3" cy="15.2" r="2.0" fill="#333"/></svg><div style="position:absolute;left:2179.00px;top:284.45px;height:24px;line-height:24px;font-size:17px;color:#1c1c1c;font-weight:normal;white-space:nowrap;transform:scaleY(1.09);">Fase</div><div style="position:absolute;left:2179.00px;top:312.45px;width:34.50px;height:34.00px;background:#fff;border:1px solid #aeaeb2;border-radius:6px;"></div><svg style="position:absolute;left:2188.00px;top:324.45px;" width="17" height="10" viewBox="0 0 17 10"><rect x="0.5" y="1.0" width="16" height="1.9" fill="#333"/><rect x="0.5" y="7.0" width="16" height="1.9" fill="#333"/></svg><div style="position:absolute;left:2218.50px;top:312.45px;width:214.50px;height:34.00px;background:#fff;border:1px solid #aeaeb2;border-radius:6px;"></div><svg style="position:absolute;left:2405.50px;top:325.45px;" width="14" height="9" viewBox="0 0 14 9"><polyline points="1.5,1.5 7,7 12.5,1.5" fill="none" stroke="#444" stroke-width="1.7" stroke-linecap="round" stroke-linejoin="round"/></svg><div style="position:absolute;left:2438.50px;top:312.45px;width:34.00px;height:34.00px;background:#fff;border:1px solid #aeaeb2;border-radius:6px;"></div><svg style="position:absolute;left:2452.50px;top:320.45px;" width="6" height="18" viewBox="0 0 6 18"><circle cx="3" cy="2.8" r="2.0" fill="#333"/><circle cx="3" cy="9" r="2.0" fill="#333"/><circle cx="3" cy="15.2" r="2.0" fill="#333"/></svg><div style="position:absolute;left:2179.00px;top:356.60px;height:24px;line-height:24px;font-size:17px;color:#1c1c1c;font-weight:normal;white-space:nowrap;transform:scaleY(1.09);">Vraag</div><div style="position:absolute;left:2179.00px;top:384.60px;width:34.50px;height:34.00px;background:#fff;border:1px solid #aeaeb2;border-radius:6px;"></div><svg style="position:absolute;left:2188.00px;top:396.60px;" width="17" height="10" viewBox="0 0 17 10"><rect x="0.5" y="1.0" width="16" height="1.9" fill="#333"/><rect x="0.5" y="7.0" width="16" height="1.9" fill="#333"/></svg><div style="position:absolute;left:2218.50px;top:384.60px;width:214.50px;height:34.00px;background:#fff;border:1px solid #aeaeb2;border-radius:6px;"></div><svg style="position:absolute;left:2405.50px;top:397.60px;" width="14" height="9" viewBox="0 0 14 9"><polyline points="1.5,1.5 7,7 12.5,1.5" fill="none" stroke="#444" stroke-width="1.7" stroke-linecap="round" stroke-linejoin="round"/></svg><div style="position:absolute;left:2438.50px;top:384.60px;width:34.00px;height:34.00px;background:#fff;border:1px solid #aeaeb2;border-radius:6px;"></div><svg style="position:absolute;left:2452.50px;top:392.60px;" width="6" height="18" viewBox="0 0 6 18"><circle cx="3" cy="2.8" r="2.0" fill="#333"/><circle cx="3" cy="9" r="2.0" fill="#333"/><circle cx="3" cy="15.2" r="2.0" fill="#333"/></svg><div style="position:absolute;left:2179.00px;top:428.75px;height:24px;line-height:24px;font-size:17px;color:#1c1c1c;font-weight:normal;white-space:nowrap;transform:scaleY(1.09);">Competentie (Materieel)</div><div style="position:absolute;left:2179.00px;top:456.75px;width:34.50px;height:34.00px;background:#fff;border:1px solid #aeaeb2;border-radius:6px;"></div><svg style="position:absolute;left:2188.00px;top:468.75px;" width="17" height="10" viewBox="0 0 17 10"><rect x="0.5" y="1.0" width="16" height="1.9" fill="#333"/><rect x="0.5" y="7.0" width="16" height="1.9" fill="#333"/></svg><div style="position:absolute;left:2218.50px;top:456.75px;width:214.50px;height:34.00px;background:#fff;border:1px solid #aeaeb2;border-radius:6px;"></div><svg style="position:absolute;left:2405.50px;top:469.75px;" width="14" height="9" viewBox="0 0 14 9"><polyline points="1.5,1.5 7,7 12.5,1.5" fill="none" stroke="#444" stroke-width="1.7" stroke-linecap="round" stroke-linejoin="round"/></svg><div style="position:absolute;left:2438.50px;top:456.75px;width:34.00px;height:34.00px;background:#fff;border:1px solid #aeaeb2;border-radius:6px;"></div><svg style="position:absolute;left:2452.50px;top:464.75px;" width="6" height="18" viewBox="0 0 6 18"><circle cx="3" cy="2.8" r="2.0" fill="#333"/><circle cx="3" cy="9" r="2.0" fill="#333"/><circle cx="3" cy="15.2" r="2.0" fill="#333"/></svg><div style="position:absolute;left:2179.00px;top:500.90px;height:24px;line-height:24px;font-size:17px;color:#1c1c1c;font-weight:normal;white-space:nowrap;transform:scaleY(1.09);">Personeel type</div><div style="position:absolute;left:2179.00px;top:528.90px;width:34.50px;height:34.00px;background:#fff;border:1px solid #aeaeb2;border-radius:6px;"></div><svg style="position:absolute;left:2188.00px;top:540.90px;" width="17" height="10" viewBox="0 0 17 10"><rect x="0.5" y="1.0" width="16" height="1.9" fill="#333"/><rect x="0.5" y="7.0" width="16" height="1.9" fill="#333"/></svg><div style="position:absolute;left:2218.50px;top:528.90px;width:214.50px;height:34.00px;background:#fff;border:1px solid #aeaeb2;border-radius:6px;"></div><svg style="position:absolute;left:2405.50px;top:541.90px;" width="14" height="9" viewBox="0 0 14 9"><polyline points="1.5,1.5 7,7 12.5,1.5" fill="none" stroke="#444" stroke-width="1.7" stroke-linecap="round" stroke-linejoin="round"/></svg><div style="position:absolute;left:2438.50px;top:528.90px;width:34.00px;height:34.00px;background:#fff;border:1px solid #aeaeb2;border-radius:6px;"></div><svg style="position:absolute;left:2452.50px;top:536.90px;" width="6" height="18" viewBox="0 0 6 18"><circle cx="3" cy="2.8" r="2.0" fill="#333"/><circle cx="3" cy="9" r="2.0" fill="#333"/><circle cx="3" cy="15.2" r="2.0" fill="#333"/></svg><div style="position:absolute;left:2179.00px;top:573.05px;height:24px;line-height:24px;font-size:17px;color:#1c1c1c;font-weight:normal;white-space:nowrap;transform:scaleY(1.09);">Personeel</div><div style="position:absolute;left:2179.00px;top:601.05px;width:34.50px;height:34.00px;background:#fff;border:1px solid #aeaeb2;border-radius:6px;"></div><svg style="position:absolute;left:2188.00px;top:613.05px;" width="17" height="10" viewBox="0 0 17 10"><rect x="0.5" y="1.0" width="16" height="1.9" fill="#333"/><rect x="0.5" y="7.0" width="16" height="1.9" fill="#333"/></svg><div style="position:absolute;left:2218.50px;top:601.05px;width:214.50px;height:34.00px;background:#fff;border:1px solid #aeaeb2;border-radius:6px;"></div><svg style="position:absolute;left:2405.50px;top:614.05px;" width="14" height="9" viewBox="0 0 14 9"><polyline points="1.5,1.5 7,7 12.5,1.5" fill="none" stroke="#444" stroke-width="1.7" stroke-linecap="round" stroke-linejoin="round"/></svg><div style="position:absolute;left:2438.50px;top:601.05px;width:34.00px;height:34.00px;background:#fff;border:1px solid #aeaeb2;border-radius:6px;"></div><svg style="position:absolute;left:2452.50px;top:609.05px;" width="6" height="18" viewBox="0 0 6 18"><circle cx="3" cy="2.8" r="2.0" fill="#333"/><circle cx="3" cy="9" r="2.0" fill="#333"/><circle cx="3" cy="15.2" r="2.0" fill="#333"/></svg><div style="position:absolute;left:2179.00px;top:645.20px;height:24px;line-height:24px;font-size:17px;color:#1c1c1c;font-weight:normal;white-space:nowrap;transform:scaleY(1.09);">Fase type</div><div style="position:absolute;left:2179.00px;top:673.20px;width:34.50px;height:34.00px;background:#fff;border:1px solid #aeaeb2;border-radius:6px;"></div><svg style="position:absolute;left:2188.00px;top:685.20px;" width="17" height="10" viewBox="0 0 17 10"><rect x="0.5" y="1.0" width="16" height="1.9" fill="#333"/><rect x="0.5" y="7.0" width="16" height="1.9" fill="#333"/></svg><div style="position:absolute;left:2218.50px;top:673.20px;width:214.50px;height:34.00px;background:#fff;border:1px solid #aeaeb2;border-radius:6px;"></div><svg style="position:absolute;left:2405.50px;top:686.20px;" width="14" height="9" viewBox="0 0 14 9"><polyline points="1.5,1.5 7,7 12.5,1.5" fill="none" stroke="#444" stroke-width="1.7" stroke-linecap="round" stroke-linejoin="round"/></svg><div style="position:absolute;left:2438.50px;top:673.20px;width:34.00px;height:34.00px;background:#fff;border:1px solid #aeaeb2;border-radius:6px;"></div><svg style="position:absolute;left:2452.50px;top:681.20px;" width="6" height="18" viewBox="0 0 6 18"><circle cx="3" cy="2.8" r="2.0" fill="#333"/><circle cx="3" cy="9" r="2.0" fill="#333"/><circle cx="3" cy="15.2" r="2.0" fill="#333"/></svg></div></div>
<svg style="position:absolute;left:2485.00px;top:66.00px;" width="13" height="10" viewBox="0 0 13 10"><polygon points="6.5,1 12,9 1,9" fill="#8a8a8a" stroke="#8a8a8a" stroke-width="1.2" stroke-linejoin="round"/></svg>
<svg style="position:absolute;left:2485.00px;top:680.50px;" width="13" height="10" viewBox="0 0 13 10"><polygon points="1,1 12,1 6.5,9" fill="#8a8a8a" stroke="#8a8a8a" stroke-width="1.2" stroke-linejoin="round"/></svg>
<div style="position:absolute;left:2486.00px;top:82.00px;width:11.00px;height:445.00px;background:#8c8c8c;border-radius:6px"></div>
<div style="position:absolute;left:2501.00px;top:58.50px;width:43.00px;height:637.90px;background:#f3f4f7;border-left:1px solid #d4d4d8"></div>
<div style="position:absolute;left:2509.80px;top:67.50px;width:40.00px;height:34.00px;background:#fff;border:1px solid #aeaeb2;border-radius:6px;"></div><div style="position:absolute;left:2509.80px;top:106.80px;width:40.00px;height:34.00px;background:#fff;border:1px solid #aeaeb2;border-radius:6px;"></div><div style="position:absolute;left:2509.80px;top:146.10px;width:40.00px;height:34.00px;background:#fff;border:1px solid #aeaeb2;border-radius:6px;"></div><div style="position:absolute;left:2509.80px;top:185.40px;width:40.00px;height:34.00px;background:#fff;border:1px solid #aeaeb2;border-radius:6px;"></div><div style="position:absolute;left:2509.80px;top:224.70px;width:40.00px;height:34.00px;background:#fff;border:1px solid #aeaeb2;border-radius:6px;"></div><div style="position:absolute;left:2509.80px;top:264.00px;width:40.00px;height:34.00px;background:#fff;border:1px solid #aeaeb2;border-radius:6px;"></div><div style="position:absolute;left:2509.80px;top:303.30px;width:40.00px;height:34.00px;background:#2563eb;border-radius:6px"></div><svg style="position:absolute;left:2519.00px;top:76.50px;" width="16" height="16" viewBox="0 0 16 16"><path d="M1,1 L15,15 M15,1 L1,15" stroke="#333" stroke-width="1.9" stroke-linecap="round"/></svg><svg style="position:absolute;left:2515.50px;top:114.30px;" width="23" height="22" viewBox="0 0 23 22"><path d="M0.5,8 C4.5,-0.5 18.5,-0.5 22.5,8 C18.5,16.5 4.5,16.5 0.5,8 Z" fill="#3a3a3a"/><circle cx="11.5" cy="8" r="5.2" fill="#fff"/><circle cx="11.5" cy="8" r="3.3" fill="#3a3a3a"/><rect x="5.8" y="18.8" width="2.4" height="2.4" fill="#3a3a3a"/><rect x="10.3" y="18.8" width="2.4" height="2.4" fill="#3a3a3a"/><rect x="14.8" y="18.8" width="2.4" height="2.4" fill="#3a3a3a"/></svg><svg style="position:absolute;left:2516.00px;top:154.10px;" width="22" height="19" viewBox="0 0 22 19"><rect x="5" y="0.5" width="12" height="4" fill="#3a3a3a"/><rect x="1" y="5.5" width="20" height="9" rx="2" fill="#3a3a3a"/><rect x="5.5" y="11" width="11" height="7" fill="#fff" stroke="#3a3a3a" stroke-width="2"/><circle cx="17.5" cy="8.3" r="1" fill="#fff"/></svg><svg style="position:absolute;left:2516.00px;top:192.40px;" width="23" height="20" viewBox="0 0 23 20"><rect x="7" y="1" width="15" height="18" rx="1" fill="none" stroke="#3a3a3a" stroke-width="1.9"/><path d="M13.5,1 V19 M7,6.8 H22 M7,12.8 H22" stroke="#3a3a3a" stroke-width="1.7"/><rect x="0.5" y="4.5" width="12" height="12" fill="#3a3a3a"/><path d="M3.3,7.3 L9.7,13.7 M9.7,7.3 L3.3,13.7" stroke="#fff" stroke-width="1.6"/></svg><svg style="position:absolute;left:2517.00px;top:232.70px;" width="20" height="18" viewBox="0 0 20 18"><rect x="1.2" y="1.2" width="17.6" height="15.6" rx="1.5" fill="none" stroke="#3a3a3a" stroke-width="2.4"/><rect x="1.2" y="1.2" width="17.6" height="4" fill="#3a3a3a"/><path d="M10,3 V17 M1,10.5 H19" stroke="#3a3a3a" stroke-width="2"/></svg><svg style="position:absolute;left:2516.00px;top:271.00px;" width="22" height="21" viewBox="0 0 22 21"><rect x="1" y="1" width="20" height="14" rx="1" fill="none" stroke="#3a3a3a" stroke-width="2"/><path d="M5,7 V5 H7.5 M17,9 V11 H14.5" stroke="#3a3a3a" stroke-width="1.6" fill="none"/><path d="M11,15 V19 M6.5,19.5 H15.5" stroke="#3a3a3a" stroke-width="2.2"/></svg><svg style="position:absolute;left:2516.00px;top:309.30px;" width="24" height="23" viewBox="0 0 24 23"><path d="M1,1.5 H19 L12.5,9.5 V20 L8.5,16.5 V9.5 Z" fill="#fff"/></svg><svg style="position:absolute;left:2529.50px;top:320.30px;" width="12" height="12" viewBox="0 0 12 12"><rect x="4.29" y="0.3" width="2.42" height="10.40" rx="0.44" fill="#fff" transform="rotate(0 5.50 5.50)"/><rect x="4.29" y="0.3" width="2.42" height="10.40" rx="0.44" fill="#fff" transform="rotate(45 5.50 5.50)"/><rect x="4.29" y="0.3" width="2.42" height="10.40" rx="0.44" fill="#fff" transform="rotate(90 5.50 5.50)"/><rect x="4.29" y="0.3" width="2.42" height="10.40" rx="0.44" fill="#fff" transform="rotate(135 5.50 5.50)"/><circle cx="5.50" cy="5.50" r="3.96" fill="#fff"/><circle cx="5.50" cy="5.50" r="1.65" fill="#2563eb"/></svg>
<div style="position:absolute;left:0.00px;top:695.40px;width:2544.00px;height:1.40px;background:#c8c8cc;z-index:6"></div>
<div style="position:absolute;left:0.00px;top:696.40px;width:2544.00px;height:629.60px;background:#fff"></div>
<div style="position:absolute;left:0.00px;top:752.20px;width:255.20px;height:562.10px;overflow:hidden;z-index:2"><div style="position:absolute;left:0.00px;top:-752.20px;width:2544px;height:1326px"><div style="position:absolute;left:0.00px;top:752.20px;width:255.50px;height:81.10px;background:linear-gradient(90deg,#c6dbf0,#cde0f3);border-bottom:1px solid #b9cfe6"></div><svg style="position:absolute;left:6.00px;top:789.80px;" width="6" height="7" viewBox="0 0 6 7"><polygon points="0.5,0.5 5.5,3.5 0.5,6.5" fill="#222"/></svg><div style="position:absolute;left:26.50px;top:781.30px;height:24px;line-height:24px;font-size:17px;color:#354556;font-weight:normal;white-space:nowrap;transform:scaleY(1.09);">|</div><div style="position:absolute;left:35.80px;top:781.30px;height:24px;line-height:24px;font-size:15.8px;color:#354556;font-weight:normal;white-space:nowrap;transform:scaleY(1.09);">DUMMY ()</div><div style="position:absolute;left:0.00px;top:832.80px;width:255.50px;height:162.00px;background:linear-gradient(90deg,#c6dbf0,#cde0f3);border-bottom:1px solid #b9cfe6"></div><svg style="position:absolute;left:6.00px;top:910.85px;" width="6" height="7" viewBox="0 0 6 7"><polygon points="0.5,0.5 5.5,3.5 0.5,6.5" fill="#222"/></svg><div style="position:absolute;left:24.00px;top:902.35px;height:24px;line-height:24px;font-size:17px;color:#354556;font-weight:normal;white-space:nowrap;transform:scaleY(1.09);">BIM en Virtual Design | Herman de Kol</div><div style="position:absolute;left:0.00px;top:994.30px;width:255.50px;height:82.40px;background:linear-gradient(90deg,#c6dbf0,#cde0f3);border-bottom:1px solid #b9cfe6"></div><svg style="position:absolute;left:6.00px;top:1032.55px;" width="6" height="7" viewBox="0 0 6 7"><polygon points="0.5,0.5 5.5,3.5 0.5,6.5" fill="#222"/></svg><div style="position:absolute;left:24.00px;top:1024.05px;height:24px;line-height:24px;font-size:17px;color:#354556;font-weight:normal;white-space:nowrap;transform:scaleY(1.09);">BIM en Virtual Design | Leo van Achter</div><div style="position:absolute;left:0.00px;top:1076.20px;width:255.50px;height:81.90px;background:linear-gradient(90deg,#c6dbf0,#cde0f3);border-bottom:1px solid #b9cfe6"></div><svg style="position:absolute;left:6.00px;top:1114.20px;" width="6" height="7" viewBox="0 0 6 7"><polygon points="0.5,0.5 5.5,3.5 0.5,6.5" fill="#222"/></svg><div style="position:absolute;left:24.00px;top:1105.70px;height:24px;line-height:24px;font-size:17px;color:#354556;font-weight:normal;white-space:nowrap;transform:scaleY(1.09);">Constructies | Eric Hegger (Lasser)</div><div style="position:absolute;left:0.00px;top:1157.60px;width:255.50px;height:103.30px;background:linear-gradient(90deg,#c6dbf0,#cde0f3);border-bottom:1px solid #b9cfe6"></div><svg style="position:absolute;left:6.00px;top:1206.30px;" width="6" height="7" viewBox="0 0 6 7"><polygon points="0.5,0.5 5.5,3.5 0.5,6.5" fill="#222"/></svg><div style="position:absolute;left:24.00px;top:1197.80px;height:24px;line-height:24px;font-size:17px;color:#354556;font-weight:normal;white-space:nowrap;transform:scaleY(1.09);">Constructies | Peter van Buiten</div><div style="position:absolute;left:0.00px;top:1260.40px;width:255.50px;height:120.10px;background:linear-gradient(90deg,#c6dbf0,#cde0f3);border-bottom:1px solid #b9cfe6"></div><svg style="position:absolute;left:6.00px;top:1298.00px;" width="6" height="7" viewBox="0 0 6 7"><polygon points="0.5,0.5 5.5,3.5 0.5,6.5" fill="#222"/></svg><div style="position:absolute;left:24.00px;top:1289.50px;height:24px;line-height:24px;font-size:17px;color:#354556;font-weight:normal;white-space:nowrap;transform:scaleY(1.09);">Verkeer | Gert van Werven (Werkvoorbereider)</div></div></div>
<div style="position:absolute;left:255.20px;top:752.20px;width:1.00px;height:562.10px;background:#e6eaee;z-index:2"></div>
<div style="position:absolute;left:256.00px;top:752.20px;width:1893.50px;height:562.10px;overflow:hidden;background:#fff"><div style="position:absolute;left:-256.00px;top:-752.20px;width:2544px;height:1326px"><div style="position:absolute;left:256.00px;top:832.30px;width:1893.50px;height:1.00px;background:#e0e0e0"></div><div style="position:absolute;left:256.00px;top:993.80px;width:1893.50px;height:1.00px;background:#e0e0e0"></div><div style="position:absolute;left:256.00px;top:1075.70px;width:1893.50px;height:1.00px;background:#e0e0e0"></div><div style="position:absolute;left:256.00px;top:1157.10px;width:1893.50px;height:1.00px;background:#e0e0e0"></div><div style="position:absolute;left:256.00px;top:1259.90px;width:1893.50px;height:1.00px;background:#e0e0e0"></div><div style="position:absolute;left:634.00px;top:752.20px;width:1.00px;height:562.10px;background:#dcdcdc"></div><div style="position:absolute;left:1012.00px;top:752.20px;width:1.00px;height:562.10px;background:#dcdcdc"></div><div style="position:absolute;left:1391.00px;top:752.20px;width:1.00px;height:562.10px;background:#dcdcdc"></div><div style="position:absolute;left:1771.00px;top:752.20px;width:1.00px;height:562.10px;background:#dcdcdc"></div><div style="position:absolute;left:255.30px;top:751.80px;width:1892.70px;height:79.90px;background:#dcf0f6;border:2px solid #000;overflow:hidden;"></div><div style="position:absolute;left:260.30px;top:758.60px;height:24px;line-height:24px;font-size:17px;color:#111;font-weight:normal;white-space:nowrap;transform:scaleY(1.09);">23478</div><div style="position:absolute;left:260.30px;top:780.50px;height:24px;line-height:24px;font-size:17px;color:#111;font-weight:normal;white-space:nowrap;transform:scaleY(1.09);">Chef monteur</div><div style="position:absolute;left:260.30px;top:802.40px;height:24px;line-height:24px;font-size:17px;color:#111;font-weight:normal;white-space:nowrap;transform:scaleY(1.09);">Parkeergarage Stuytsehoek</div><div style="position:absolute;left:1743.00px;width:400px;text-align:right;top:758.60px;height:24px;line-height:24px;font-size:17px;color:#111;white-space:nowrap;transform:scaleY(1.09);">40</div><div style="position:absolute;left:255.30px;top:832.90px;width:377.30px;height:79.70px;background:#dcf0f6;border:2px solid #000;overflow:hidden;"></div><div style="position:absolute;left:260.30px;top:839.90px;height:24px;line-height:24px;font-size:17px;color:#111;font-weight:normal;white-space:nowrap;transform:scaleY(1.09);">345466</div><div style="position:absolute;left:260.30px;top:861.80px;height:24px;line-height:24px;font-size:17px;color:#111;font-weight:normal;white-space:nowrap;transform:scaleY(1.09);">Grondwerker</div><div style="position:absolute;left:260.30px;top:883.70px;height:24px;line-height:24px;font-size:17px;color:#111;font-weight:normal;white-space:nowrap;transform:scaleY(1.09);">Uitbreiding Middenspanningsnet</div><div style="position:absolute;left:227.60px;width:400px;text-align:right;top:839.90px;height:24px;line-height:24px;font-size:17px;color:#111;white-space:nowrap;transform:scaleY(1.09);">8</div><div style="position:absolute;left:255.30px;top:914.00px;width:377.30px;height:79.70px;background:#c8dcf1;border:2px solid #000;overflow:hidden;"></div><div style="position:absolute;left:260.30px;top:920.60px;height:24px;line-height:24px;font-size:17px;color:#111;font-weight:normal;white-space:nowrap;transform:scaleY(1.09);">45656620</div><div style="position:absolute;left:260.30px;top:942.50px;height:24px;line-height:24px;font-size:17px;color:#111;font-weight:normal;white-space:nowrap;transform:scaleY(1.09);">Project Groningen</div><div style="position:absolute;left:260.30px;top:964.40px;height:24px;line-height:24px;font-size:17px;color:#111;font-weight:normal;white-space:nowrap;transform:scaleY(1.09);">Chef monteur</div><div style="position:absolute;left:227.60px;width:400px;text-align:right;top:920.60px;height:24px;line-height:24px;font-size:17px;color:#111;white-space:nowrap;transform:scaleY(1.09);">8</div><div style="position:absolute;left:635.10px;top:832.90px;width:375.50px;height:79.70px;background:#dcf0f6;border:2px solid #000;overflow:hidden;"></div><div style="position:absolute;left:640.10px;top:839.90px;height:24px;line-height:24px;font-size:17px;color:#111;font-weight:normal;white-space:nowrap;transform:scaleY(1.09);">345466</div><div style="position:absolute;left:640.10px;top:861.80px;height:24px;line-height:24px;font-size:17px;color:#111;font-weight:normal;white-space:nowrap;transform:scaleY(1.09);">Grondwerker</div><div style="position:absolute;left:640.10px;top:883.70px;height:24px;line-height:24px;font-size:17px;color:#111;font-weight:normal;white-space:nowrap;transform:scaleY(1.09);">Uitbreiding Middenspanningsnet</div><div style="position:absolute;left:605.60px;width:400px;text-align:right;top:839.90px;height:24px;line-height:24px;font-size:17px;color:#111;white-space:nowrap;transform:scaleY(1.09);">8</div><div style="position:absolute;left:635.10px;top:914.00px;width:375.50px;height:79.70px;background:#c8dcf1;border:2px solid #000;overflow:hidden;"></div><div style="position:absolute;left:640.10px;top:920.60px;height:24px;line-height:24px;font-size:17px;color:#111;font-weight:normal;white-space:nowrap;transform:scaleY(1.09);">45656620</div><div style="position:absolute;left:640.10px;top:942.50px;height:24px;line-height:24px;font-size:17px;color:#111;font-weight:normal;white-space:nowrap;transform:scaleY(1.09);">Project Groningen</div><div style="position:absolute;left:640.10px;top:964.40px;height:24px;line-height:24px;font-size:17px;color:#111;font-weight:normal;white-space:nowrap;transform:scaleY(1.09);">Chef monteur</div><div style="position:absolute;left:605.60px;width:400px;text-align:right;top:920.60px;height:24px;line-height:24px;font-size:17px;color:#111;white-space:nowrap;transform:scaleY(1.09);">8</div><div style="position:absolute;left:1013.10px;top:832.90px;width:376.50px;height:79.70px;background:#dcf0f6;border:2px solid #000;overflow:hidden;"></div><div style="position:absolute;left:1018.10px;top:839.90px;height:24px;line-height:24px;font-size:17px;color:#111;font-weight:normal;white-space:nowrap;transform:scaleY(1.09);">345466</div><div style="position:absolute;left:1018.10px;top:861.80px;height:24px;line-height:24px;font-size:17px;color:#111;font-weight:normal;white-space:nowrap;transform:scaleY(1.09);">Grondwerker</div><div style="position:absolute;left:1018.10px;top:883.70px;height:24px;line-height:24px;font-size:17px;color:#111;font-weight:normal;white-space:nowrap;transform:scaleY(1.09);">Uitbreiding Middenspanningsnet</div><div style="position:absolute;left:984.60px;width:400px;text-align:right;top:839.90px;height:24px;line-height:24px;font-size:17px;color:#111;white-space:nowrap;transform:scaleY(1.09);">8</div><div style="position:absolute;left:1013.10px;top:914.00px;width:376.50px;height:79.70px;background:#c8dcf1;border:2px solid #000;overflow:hidden;"></div><div style="position:absolute;left:1018.10px;top:920.60px;height:24px;line-height:24px;font-size:17px;color:#111;font-weight:normal;white-space:nowrap;transform:scaleY(1.09);">45656620</div><div style="position:absolute;left:1018.10px;top:942.50px;height:24px;line-height:24px;font-size:17px;color:#111;font-weight:normal;white-space:nowrap;transform:scaleY(1.09);">Project Groningen</div><div style="position:absolute;left:1018.10px;top:964.40px;height:24px;line-height:24px;font-size:17px;color:#111;font-weight:normal;white-space:nowrap;transform:scaleY(1.09);">Chef monteur</div><div style="position:absolute;left:984.60px;width:400px;text-align:right;top:920.60px;height:24px;line-height:24px;font-size:17px;color:#111;white-space:nowrap;transform:scaleY(1.09);">8</div><div style="position:absolute;left:1392.10px;top:832.90px;width:377.50px;height:79.70px;background:#dcf0f6;border:2px solid #000;overflow:hidden;"></div><div style="position:absolute;left:1397.10px;top:839.90px;height:24px;line-height:24px;font-size:17px;color:#111;font-weight:normal;white-space:nowrap;transform:scaleY(1.09);">345466</div><div style="position:absolute;left:1397.10px;top:861.80px;height:24px;line-height:24px;font-size:17px;color:#111;font-weight:normal;white-space:nowrap;transform:scaleY(1.09);">Grondwerker</div><div style="position:absolute;left:1397.10px;top:883.70px;height:24px;line-height:24px;font-size:17px;color:#111;font-weight:normal;white-space:nowrap;transform:scaleY(1.09);">Uitbreiding Middenspanningsnet</div><div style="position:absolute;left:1364.60px;width:400px;text-align:right;top:839.90px;height:24px;line-height:24px;font-size:17px;color:#111;white-space:nowrap;transform:scaleY(1.09);">8</div><div style="position:absolute;left:1392.10px;top:914.00px;width:377.50px;height:79.70px;background:#c8dcf1;border:2px solid #000;overflow:hidden;"></div><div style="position:absolute;left:1397.10px;top:920.60px;height:24px;line-height:24px;font-size:17px;color:#111;font-weight:normal;white-space:nowrap;transform:scaleY(1.09);">45656620</div><div style="position:absolute;left:1397.10px;top:942.50px;height:24px;line-height:24px;font-size:17px;color:#111;font-weight:normal;white-space:nowrap;transform:scaleY(1.09);">Project Groningen</div><div style="position:absolute;left:1397.10px;top:964.40px;height:24px;line-height:24px;font-size:17px;color:#111;font-weight:normal;white-space:nowrap;transform:scaleY(1.09);">Chef monteur</div><div style="position:absolute;left:1364.60px;width:400px;text-align:right;top:920.60px;height:24px;line-height:24px;font-size:17px;color:#111;white-space:nowrap;transform:scaleY(1.09);">8</div><div style="position:absolute;left:1772.10px;top:832.90px;width:375.50px;height:79.70px;background:#dcf0f6;border:2px solid #000;overflow:hidden;"></div><div style="position:absolute;left:1777.10px;top:839.90px;height:24px;line-height:24px;font-size:17px;color:#111;font-weight:normal;white-space:nowrap;transform:scaleY(1.09);">345466</div><div style="position:absolute;left:1777.10px;top:861.80px;height:24px;line-height:24px;font-size:17px;color:#111;font-weight:normal;white-space:nowrap;transform:scaleY(1.09);">Grondwerker</div><div style="position:absolute;left:1777.10px;top:883.70px;height:24px;line-height:24px;font-size:17px;color:#111;font-weight:normal;white-space:nowrap;transform:scaleY(1.09);">Uitbreiding Middenspanningsnet</div><div style="position:absolute;left:1742.60px;width:400px;text-align:right;top:839.90px;height:24px;line-height:24px;font-size:17px;color:#111;white-space:nowrap;transform:scaleY(1.09);">8</div><div style="position:absolute;left:1772.10px;top:914.00px;width:375.50px;height:79.70px;background:#c8dcf1;border:2px solid #000;overflow:hidden;"></div><div style="position:absolute;left:1777.10px;top:920.60px;height:24px;line-height:24px;font-size:17px;color:#111;font-weight:normal;white-space:nowrap;transform:scaleY(1.09);">45656620</div><div style="position:absolute;left:1777.10px;top:942.50px;height:24px;line-height:24px;font-size:17px;color:#111;font-weight:normal;white-space:nowrap;transform:scaleY(1.09);">Project Groningen</div><div style="position:absolute;left:1777.10px;top:964.40px;height:24px;line-height:24px;font-size:17px;color:#111;font-weight:normal;white-space:nowrap;transform:scaleY(1.09);">Chef monteur</div><div style="position:absolute;left:1742.60px;width:400px;text-align:right;top:920.60px;height:24px;line-height:24px;font-size:17px;color:#111;white-space:nowrap;transform:scaleY(1.09);">8</div><div style="position:absolute;left:255.30px;top:994.80px;width:1892.70px;height:79.90px;background:#dcf0f6;border:2px solid #000;overflow:hidden;"></div><div style="position:absolute;left:260.30px;top:1001.50px;height:24px;line-height:24px;font-size:17px;color:#111;font-weight:normal;white-space:nowrap;transform:scaleY(1.09);">3456678</div><div style="position:absolute;left:260.30px;top:1045.30px;height:24px;line-height:24px;font-size:15.3px;color:#111;font-weight:normal;white-space:nowrap;transform:scaleY(1.09);">SPOORSE KABELS VERNIEUWEN</div><div style="position:absolute;left:1743.00px;width:400px;text-align:right;top:1001.50px;height:24px;line-height:24px;font-size:17px;color:#111;white-space:nowrap;transform:scaleY(1.09);">40</div><div style="position:absolute;left:1013.10px;top:1077.80px;width:376.50px;height:77.80px;background:#c8dcf1;border:2px solid #3ad43a;overflow:hidden;"></div><div style="position:absolute;left:1018.10px;top:1083.10px;height:24px;line-height:24px;font-size:17px;color:#111;font-weight:normal;white-space:nowrap;transform:scaleY(1.09);">45656620</div><div style="position:absolute;left:1018.10px;top:1105.00px;height:24px;line-height:24px;font-size:17px;color:#111;font-weight:normal;white-space:nowrap;transform:scaleY(1.09);">Project Groningen</div><div style="position:absolute;left:1018.10px;top:1126.90px;height:24px;line-height:24px;font-size:17px;color:#111;font-weight:normal;white-space:nowrap;transform:scaleY(1.09);">Grondwerker</div><div style="position:absolute;left:984.60px;width:400px;text-align:right;top:1083.10px;height:24px;line-height:24px;font-size:17px;color:#111;white-space:nowrap;transform:scaleY(1.09);">8</div><div style="position:absolute;left:255.30px;top:1158.00px;width:377.30px;height:100.60px;background:#c8dcf1;border:2px solid #000;overflow:hidden;"></div><div style="position:absolute;left:260.30px;top:1163.50px;height:24px;line-height:24px;font-size:17px;color:#111;font-weight:normal;white-space:nowrap;transform:scaleY(1.09);">56566046</div><div style="position:absolute;left:260.30px;top:1185.40px;height:24px;line-height:24px;font-size:17px;color:#111;font-weight:normal;white-space:nowrap;transform:scaleY(1.09);">Werkzaamheden A24</div><div style="position:absolute;left:260.30px;top:1207.30px;height:24px;line-height:24px;font-size:17px;color:#111;font-weight:normal;white-space:nowrap;transform:scaleY(1.09);">Grondwerker</div><div style="position:absolute;left:260.30px;top:1229.20px;height:24px;line-height:24px;font-size:17px;color:#111;font-weight:normal;white-space:nowrap;transform:scaleY(1.09);">Boskalis</div><div style="position:absolute;left:227.60px;width:400px;text-align:right;top:1163.50px;height:24px;line-height:24px;font-size:17px;color:#111;white-space:nowrap;transform:scaleY(1.09);">8</div><div style="position:absolute;left:1013.10px;top:1158.00px;width:376.50px;height:100.60px;background:#c8dcf1;border:2px solid #000;overflow:hidden;"></div><div style="position:absolute;left:1018.10px;top:1163.50px;height:24px;line-height:24px;font-size:17px;color:#111;font-weight:normal;white-space:nowrap;transform:scaleY(1.09);">56566046</div><div style="position:absolute;left:1018.10px;top:1185.40px;height:24px;line-height:24px;font-size:17px;color:#111;font-weight:normal;white-space:nowrap;transform:scaleY(1.09);">Werkzaamheden A24</div><div style="position:absolute;left:1018.10px;top:1207.30px;height:24px;line-height:24px;font-size:17px;color:#111;font-weight:normal;white-space:nowrap;transform:scaleY(1.09);">Grondwerker</div><div style="position:absolute;left:1018.10px;top:1229.20px;height:24px;line-height:24px;font-size:17px;color:#111;font-weight:normal;white-space:nowrap;transform:scaleY(1.09);">Boskalis</div><div style="position:absolute;left:984.60px;width:400px;text-align:right;top:1163.50px;height:24px;line-height:24px;font-size:17px;color:#111;white-space:nowrap;transform:scaleY(1.09);">8</div><div style="position:absolute;left:1392.10px;top:1158.00px;width:377.50px;height:78.60px;background:#dcf0f6;border:2px solid #000;overflow:hidden;"></div><div style="position:absolute;left:1397.10px;top:1163.50px;height:24px;line-height:24px;font-size:17px;color:#111;font-weight:normal;white-space:nowrap;transform:scaleY(1.09);">345466</div><div style="position:absolute;left:1397.10px;top:1185.40px;height:24px;line-height:24px;font-size:17px;color:#111;font-weight:normal;white-space:nowrap;transform:scaleY(1.09);">Grondwerker</div><div style="position:absolute;left:1397.10px;top:1207.30px;height:24px;line-height:24px;font-size:17px;color:#111;font-weight:normal;white-space:nowrap;transform:scaleY(1.09);">Uitbreiding Middenspanningsnet</div><div style="position:absolute;left:1364.60px;width:400px;text-align:right;top:1163.50px;height:24px;line-height:24px;font-size:17px;color:#111;white-space:nowrap;transform:scaleY(1.09);">8</div><div style="position:absolute;left:255.30px;top:1261.30px;width:377.30px;height:83.70px;background:#c8dcf1;border:2px solid #3ad43a;overflow:hidden;"></div><div style="position:absolute;left:260.30px;top:1267.20px;height:24px;line-height:24px;font-size:17px;color:#111;font-weight:normal;white-space:nowrap;transform:scaleY(1.09);">444545</div><div style="position:absolute;left:260.30px;top:1289.10px;height:24px;line-height:24px;font-size:17px;color:#111;font-weight:normal;white-space:nowrap;transform:scaleY(1.09);">Ziekenhuis verbouwing</div><div style="position:absolute;left:260.30px;top:1311.00px;height:24px;line-height:24px;font-size:17px;color:#111;font-weight:normal;white-space:nowrap;transform:scaleY(1.09);">Parkeergarage</div><div style="position:absolute;left:227.60px;width:400px;text-align:right;top:1267.20px;height:24px;line-height:24px;font-size:17px;color:#111;white-space:nowrap;transform:scaleY(1.09);">8</div><div style="position:absolute;left:1013.10px;top:1261.30px;width:376.50px;height:83.70px;background:#c8dcf1;border:2px solid #000;overflow:hidden;"></div><div style="position:absolute;left:1018.10px;top:1267.20px;height:24px;line-height:24px;font-size:17px;color:#111;font-weight:normal;white-space:nowrap;transform:scaleY(1.09);">45656620</div><div style="position:absolute;left:1018.10px;top:1289.10px;height:24px;line-height:24px;font-size:17px;color:#111;font-weight:normal;white-space:nowrap;transform:scaleY(1.09);">Project Groningen</div><div style="position:absolute;left:1018.10px;top:1311.00px;height:24px;line-height:24px;font-size:17px;color:#111;font-weight:normal;white-space:nowrap;transform:scaleY(1.09);">Grondwerker</div><div style="position:absolute;left:984.60px;width:400px;text-align:right;top:1267.20px;height:24px;line-height:24px;font-size:17px;color:#111;white-space:nowrap;transform:scaleY(1.09);">8</div><div style="position:absolute;left:478.20px;top:752.20px;width:2.20px;height:562.10px;background:#1b6aa0"></div></div></div>
<div style="position:absolute;left:0;top:0;width:0;height:0;z-index:1"><div style="position:absolute;left:256.00px;top:696.40px;width:1893.50px;height:54.80px;background:#f3f3f6;border-bottom:1px solid #d0d0d4;box-shadow:0 3px 6px rgba(0,0,0,0.07)"></div><div style="position:absolute;left:256.00px;top:723.80px;width:1893.50px;height:1.00px;background:#dcdcdf"></div><div style="position:absolute;left:1002.00px;width:400px;text-align:center;top:698.40px;height:24px;line-height:24px;font-size:14.55px;color:#1e6fa3;font-weight:normal;-webkit-text-stroke:0.45px #1e6fa3;white-space:nowrap">Wk 14, 31 Mrt - 06 Apr 2025</div><div style="position:absolute;left:245.25px;width:400px;text-align:center;top:726.20px;height:24px;line-height:24px;font-size:14.55px;color:#1e6fa3;font-weight:normal;-webkit-text-stroke:0.45px #1e6fa3;white-space:nowrap">Ma 31 Mrt 2025</div><div style="position:absolute;left:623.50px;width:400px;text-align:center;top:726.20px;height:24px;line-height:24px;font-size:14.55px;color:#555a60;font-weight:normal;-webkit-text-stroke:0.45px #555a60;white-space:nowrap">Di 1 Apr 2025</div><div style="position:absolute;left:634.00px;top:724.40px;width:1.00px;height:27.00px;background:#dcdcdf"></div><div style="position:absolute;left:1002.00px;width:400px;text-align:center;top:726.20px;height:24px;line-height:24px;font-size:14.55px;color:#555a60;font-weight:normal;-webkit-text-stroke:0.45px #555a60;white-space:nowrap">Wo 2 Apr 2025</div><div style="position:absolute;left:1012.00px;top:724.40px;width:1.00px;height:27.00px;background:#dcdcdf"></div><div style="position:absolute;left:1381.50px;width:400px;text-align:center;top:726.20px;height:24px;line-height:24px;font-size:14.55px;color:#555a60;font-weight:normal;-webkit-text-stroke:0.45px #555a60;white-space:nowrap">Do 3 Apr 2025</div><div style="position:absolute;left:1391.00px;top:724.40px;width:1.00px;height:27.00px;background:#dcdcdf"></div><div style="position:absolute;left:1760.50px;width:400px;text-align:center;top:726.20px;height:24px;line-height:24px;font-size:14.55px;color:#555a60;font-weight:normal;-webkit-text-stroke:0.45px #555a60;white-space:nowrap">Vr 4 Apr 2025</div><div style="position:absolute;left:1771.00px;top:724.40px;width:1.00px;height:27.00px;background:#dcdcdf"></div></div>
<div style="position:absolute;left:0.00px;top:696.40px;width:255.50px;height:54.80px;background:#f2f3f6;box-shadow:0 3px 6px rgba(0,0,0,0.10);z-index:3"></div><svg style="position:absolute;left:3.50px;top:716.90px;z-index:4;" width="20" height="14" viewBox="0 0 20 14"><rect x="0.5" y="1" width="12" height="2.2" fill="#3a3a3a"/><rect x="0.5" y="6" width="10" height="2.2" fill="#3a3a3a"/><rect x="0.5" y="11" width="12" height="2.2" fill="#3a3a3a"/><polyline points="18.5,2.5 14.2,7 18.5,11.5" fill="none" stroke="#3a3a3a" stroke-width="2"/></svg><div style="position:absolute;left:31.50px;top:711.90px;height:24px;line-height:24px;font-size:17.3px;color:#3a4452;font-weight:normal;white-space:nowrap;transform:scaleY(1.09);z-index:4">Personeel</div><svg style="position:absolute;left:209.00px;top:714.90px;z-index:4;" width="16" height="16" viewBox="0 0 16 16"><circle cx="6.5" cy="6.3" r="4.6" fill="none" stroke="#2a2a2a" stroke-width="1.5"/><path d="M9.8,9.6 L14.4,14.2" stroke="#2a2a2a" stroke-width="1.8" stroke-linecap="round"/></svg><svg style="position:absolute;left:228.00px;top:713.90px;z-index:4;" width="19" height="19" viewBox="0 0 19 19"><rect x="7.60" y="1.90" width="3.80" height="15.20" rx="0.61" fill="#2a2a2a" transform="rotate(0 9.50 9.50)"/><rect x="7.60" y="1.90" width="3.80" height="15.20" rx="0.61" fill="#2a2a2a" transform="rotate(60 9.50 9.50)"/><rect x="7.60" y="1.90" width="3.80" height="15.20" rx="0.61" fill="#2a2a2a" transform="rotate(120 9.50 9.50)"/><circle cx="9.50" cy="9.50" r="6.23" fill="#2a2a2a"/><circle cx="9.50" cy="9.50" r="2.74" fill="#f2f3f6"/></svg>
<svg style="position:absolute;left:190.50px;top:719.90px;z-index:5;" width="12" height="8" viewBox="0 0 12 8"><polygon points="6,0.8 11.2,7 0.8,7" fill="#222"/></svg>
<div style="position:absolute;left:0.00px;top:1314.30px;width:2149.50px;height:11.70px;background:#fcfcfd"></div><svg style="position:absolute;left:-0.80px;top:1318.30px;" width="10" height="13" viewBox="0 0 10 13"><polygon points="9,1 1,6.5 9,12" fill="#8a8a8a" stroke="#8a8a8a" stroke-width="1.2" stroke-linejoin="round"/></svg><svg style="position:absolute;left:2135.50px;top:1318.30px;" width="10" height="13" viewBox="0 0 10 13"><polygon points="1,1 9,6.5 1,12" fill="#8a8a8a" stroke="#8a8a8a" stroke-width="1.2" stroke-linejoin="round"/></svg><div style="position:absolute;left:860.30px;top:1319.20px;width:422.60px;height:10.60px;background:#8c8c8c;border-radius:6px"></div>
<div style="position:absolute;left:2149.50px;top:696.40px;width:21.00px;height:629.60px;background:#fbfbfc;border-left:1px solid #d0d0d4;border-right:1px solid #d6d6da"></div><svg style="position:absolute;left:2154.00px;top:703.50px;" width="13" height="10" viewBox="0 0 13 10"><polygon points="6.5,1 12,9 1,9" fill="#8a8a8a" stroke="#8a8a8a" stroke-width="1.2" stroke-linejoin="round"/></svg><svg style="position:absolute;left:2154.00px;top:1299.00px;" width="13" height="10" viewBox="0 0 13 10"><polygon points="1,1 12,1 6.5,9" fill="#8a8a8a" stroke="#8a8a8a" stroke-width="1.2" stroke-linejoin="round"/></svg><div style="position:absolute;left:2155.00px;top:720.20px;width:11.00px;height:422.80px;background:#8c8c8c;border-radius:6px"></div>
<div style="position:absolute;left:2170.50px;top:696.40px;width:331.00px;height:629.60px;background:#f3f4f7;border-right:1px solid #d4d4d8"></div>
<div style="position:absolute;left:2170.50px;top:696.40px;width:331.00px;height:629.60px;overflow:hidden;"><div style="position:absolute;left:-2170.50px;top:-696.40px;width:2544px;height:1326px"><div style="position:absolute;left:2179.00px;top:705.80px;height:24px;line-height:24px;font-size:17px;color:#1c1c1c;font-weight:normal;white-space:nowrap;transform:scaleY(1.09);">Personeel</div><div style="position:absolute;left:2179.00px;top:734.40px;width:34.30px;height:34.00px;background:#fff;border:1px solid #aeaeb2;border-radius:6px;"></div><svg style="position:absolute;left:2188.00px;top:746.40px;" width="17" height="10" viewBox="0 0 17 10"><rect x="0.5" y="1.0" width="16" height="1.9" fill="#333"/><rect x="0.5" y="7.0" width="16" height="1.9" fill="#333"/></svg><div style="position:absolute;left:2218.30px;top:734.40px;width:233.70px;height:34.00px;background:#fff;border:1px solid #aeaeb2;border-radius:6px;"></div><svg style="position:absolute;left:2424.50px;top:747.40px;" width="14" height="9" viewBox="0 0 14 9"><polyline points="1.5,1.5 7,7 12.5,1.5" fill="none" stroke="#444" stroke-width="1.7" stroke-linecap="round" stroke-linejoin="round"/></svg><div style="position:absolute;left:2457.30px;top:734.40px;width:34.20px;height:34.00px;background:#fff;border:1px solid #aeaeb2;border-radius:6px;"></div><svg style="position:absolute;left:2471.40px;top:742.40px;" width="6" height="18" viewBox="0 0 6 18"><circle cx="3" cy="2.8" r="2.0" fill="#333"/><circle cx="3" cy="9" r="2.0" fill="#333"/><circle cx="3" cy="15.2" r="2.0" fill="#333"/></svg><div style="position:absolute;left:2179.00px;top:778.00px;height:24px;line-height:24px;font-size:17px;color:#1c1c1c;font-weight:normal;white-space:nowrap;transform:scaleY(1.09);">Personeel &gt; archiveren</div><div style="position:absolute;left:2179.00px;top:806.60px;width:34.30px;height:34.00px;background:#fff;border:1px solid #aeaeb2;border-radius:6px;"></div><svg style="position:absolute;left:2188.00px;top:818.60px;" width="17" height="10" viewBox="0 0 17 10"><rect x="0.5" y="1.0" width="16" height="1.9" fill="#333"/><rect x="0.5" y="7.0" width="16" height="1.9" fill="#333"/></svg><div style="position:absolute;left:2218.30px;top:806.60px;width:233.70px;height:34.00px;background:#fff;border:1px solid #aeaeb2;border-radius:6px;"></div><svg style="position:absolute;left:2424.50px;top:819.60px;" width="14" height="9" viewBox="0 0 14 9"><polyline points="1.5,1.5 7,7 12.5,1.5" fill="none" stroke="#444" stroke-width="1.7" stroke-linecap="round" stroke-linejoin="round"/></svg><div style="position:absolute;left:2457.30px;top:806.60px;width:34.20px;height:34.00px;background:#fff;border:1px solid #aeaeb2;border-radius:6px;"></div><svg style="position:absolute;left:2471.40px;top:814.60px;" width="6" height="18" viewBox="0 0 6 18"><circle cx="3" cy="2.8" r="2.0" fill="#333"/><circle cx="3" cy="9" r="2.0" fill="#333"/><circle cx="3" cy="15.2" r="2.0" fill="#333"/></svg><div style="position:absolute;left:2179.00px;top:850.20px;height:24px;line-height:24px;font-size:17px;color:#1c1c1c;font-weight:normal;white-space:nowrap;transform:scaleY(1.09);">Competentie (Personeel)</div><div style="position:absolute;left:2179.00px;top:878.80px;width:34.30px;height:34.00px;background:#fff;border:1px solid #aeaeb2;border-radius:6px;"></div><svg style="position:absolute;left:2188.00px;top:890.80px;" width="17" height="10" viewBox="0 0 17 10"><rect x="0.5" y="1.0" width="16" height="1.9" fill="#333"/><rect x="0.5" y="7.0" width="16" height="1.9" fill="#333"/></svg><div style="position:absolute;left:2218.30px;top:878.80px;width:233.70px;height:34.00px;background:#fff;border:1px solid #aeaeb2;border-radius:6px;"></div><svg style="position:absolute;left:2424.50px;top:891.80px;" width="14" height="9" viewBox="0 0 14 9"><polyline points="1.5,1.5 7,7 12.5,1.5" fill="none" stroke="#444" stroke-width="1.7" stroke-linecap="round" stroke-linejoin="round"/></svg><div style="position:absolute;left:2457.30px;top:878.80px;width:34.20px;height:34.00px;background:#fff;border:1px solid #aeaeb2;border-radius:6px;"></div><svg style="position:absolute;left:2471.40px;top:886.80px;" width="6" height="18" viewBox="0 0 6 18"><circle cx="3" cy="2.8" r="2.0" fill="#333"/><circle cx="3" cy="9" r="2.0" fill="#333"/><circle cx="3" cy="15.2" r="2.0" fill="#333"/></svg><div style="position:absolute;left:2179.00px;top:922.40px;height:24px;line-height:24px;font-size:17px;color:#1c1c1c;font-weight:normal;white-space:nowrap;transform:scaleY(1.09);">Vestiging</div><div style="position:absolute;left:2179.00px;top:951.00px;width:34.30px;height:34.00px;background:#2563eb;border:1px solid #2a5fd6;border-radius:6px"></div><svg style="position:absolute;left:2188.00px;top:963.00px;" width="17" height="10" viewBox="0 0 17 10"><rect x="0.5" y="1.0" width="16" height="1.9" fill="#fff"/><rect x="0.5" y="7.0" width="16" height="1.9" fill="#fff"/></svg><div style="position:absolute;left:2218.30px;top:951.00px;width:233.70px;height:34.00px;background:#fff;border:1px solid #aeaeb2;border-radius:6px;"></div><div style="position:absolute;left:2226.80px;top:956.50px;height:24px;line-height:24px;font-size:15.3px;color:#3a4452;font-weight:normal;white-space:nowrap;transform:scaleY(1.09);">VESTIGING ROTT···</div><div style="position:absolute;left:2418.00px;top:951.00px;width:1.00px;height:34.00px;background:#c4c4c8"></div><svg style="position:absolute;left:2391.50px;top:964.00px;" width="14" height="9" viewBox="0 0 14 9"><polyline points="1.5,1.5 7,7 12.5,1.5" fill="none" stroke="#444" stroke-width="1.7" stroke-linecap="round" stroke-linejoin="round"/></svg><svg style="position:absolute;left:2428.00px;top:961.00px;" width="15" height="15" viewBox="0 0 15 15"><path d="M1,1 L14,14 M14,1 L1,14" stroke="#333" stroke-width="1.8" stroke-linecap="round"/></svg><div style="position:absolute;left:2457.30px;top:951.00px;width:34.20px;height:34.00px;background:#fff;border:1px solid #aeaeb2;border-radius:6px;"></div><svg style="position:absolute;left:2471.40px;top:959.00px;" width="6" height="18" viewBox="0 0 6 18"><circle cx="3" cy="2.8" r="2.0" fill="#333"/><circle cx="3" cy="9" r="2.0" fill="#333"/><circle cx="3" cy="15.2" r="2.0" fill="#333"/></svg><div style="position:absolute;left:2179.00px;top:994.60px;height:24px;line-height:24px;font-size:17px;color:#1c1c1c;font-weight:normal;white-space:nowrap;transform:scaleY(1.09);">Beschikbaarheid &gt; conflict status</div><div style="position:absolute;left:2179.00px;top:1023.20px;width:34.30px;height:34.00px;background:#fff;border:1px solid #aeaeb2;border-radius:6px;"></div><svg style="position:absolute;left:2188.00px;top:1035.20px;" width="17" height="10" viewBox="0 0 17 10"><rect x="0.5" y="1.0" width="16" height="1.9" fill="#333"/><rect x="0.5" y="7.0" width="16" height="1.9" fill="#333"/></svg><div style="position:absolute;left:2218.30px;top:1023.20px;width:233.70px;height:34.00px;background:#fff;border:1px solid #aeaeb2;border-radius:6px;"></div><svg style="position:absolute;left:2424.50px;top:1036.20px;" width="14" height="9" viewBox="0 0 14 9"><polyline points="1.5,1.5 7,7 12.5,1.5" fill="none" stroke="#444" stroke-width="1.7" stroke-linecap="round" stroke-linejoin="round"/></svg><div style="position:absolute;left:2457.30px;top:1023.20px;width:34.20px;height:34.00px;background:#fff;border:1px solid #aeaeb2;border-radius:6px;"></div><svg style="position:absolute;left:2471.40px;top:1031.20px;" width="6" height="18" viewBox="0 0 6 18"><circle cx="3" cy="2.8" r="2.0" fill="#333"/><circle cx="3" cy="9" r="2.0" fill="#333"/><circle cx="3" cy="15.2" r="2.0" fill="#333"/></svg><div style="position:absolute;left:2179.50px;top:1066.50px;width:312.00px;height:34.00px;background:#fff;border:1px solid #aeaeb2;border-radius:6px;"></div><svg style="position:absolute;left:2188.00px;top:1076.00px;" width="16" height="16" viewBox="0 0 16 16"><path d="M8,1 V15 M1,8 H15" stroke="#3a3a3a" stroke-width="2"/></svg><div style="position:absolute;left:2213.50px;top:1072.00px;height:24px;line-height:24px;font-size:17.3px;color:#3a4452;font-weight:normal;white-space:nowrap;transform:scaleY(1.09);">Voeg een filter toe</div></div></div>
<div style="position:absolute;left:2501.00px;top:696.40px;width:43.00px;height:629.60px;background:#f3f4f7;border-left:1px solid #d4d4d8"></div>
<div style="position:absolute;left:2509.80px;top:705.20px;width:40.00px;height:34.00px;background:#fff;border:1px solid #aeaeb2;border-radius:6px;"></div><div style="position:absolute;left:2509.80px;top:744.50px;width:40.00px;height:34.00px;background:#fff;border:1px solid #aeaeb2;border-radius:6px;"></div><div style="position:absolute;left:2509.80px;top:783.80px;width:40.00px;height:34.00px;background:#fff;border:1px solid #aeaeb2;border-radius:6px;"></div><div style="position:absolute;left:2509.80px;top:823.10px;width:40.00px;height:34.00px;background:#fff;border:1px solid #aeaeb2;border-radius:6px;"></div><div style="position:absolute;left:2509.80px;top:862.40px;width:40.00px;height:34.00px;background:#fff;border:1px solid #aeaeb2;border-radius:6px;"></div><div style="position:absolute;left:2509.80px;top:901.70px;width:40.00px;height:34.00px;background:#fff;border:1px solid #aeaeb2;border-radius:6px;"></div><div style="position:absolute;left:2509.80px;top:941.00px;width:40.00px;height:34.00px;background:#2563eb;border-radius:6px"></div><svg style="position:absolute;left:2519.00px;top:714.20px;" width="16" height="16" viewBox="0 0 16 16"><path d="M1,1 L15,15 M15,1 L1,15" stroke="#333" stroke-width="1.9" stroke-linecap="round"/></svg><svg style="position:absolute;left:2515.50px;top:752.00px;" width="23" height="22" viewBox="0 0 23 22"><path d="M0.5,8 C4.5,-0.5 18.5,-0.5 22.5,8 C18.5,16.5 4.5,16.5 0.5,8 Z" fill="#3a3a3a"/><circle cx="11.5" cy="8" r="5.2" fill="#fff"/><circle cx="11.5" cy="8" r="3.3" fill="#3a3a3a"/><rect x="5.8" y="18.8" width="2.4" height="2.4" fill="#3a3a3a"/><rect x="10.3" y="18.8" width="2.4" height="2.4" fill="#3a3a3a"/><rect x="14.8" y="18.8" width="2.4" height="2.4" fill="#3a3a3a"/></svg><svg style="position:absolute;left:2516.00px;top:791.80px;" width="22" height="19" viewBox="0 0 22 19"><rect x="5" y="0.5" width="12" height="4" fill="#3a3a3a"/><rect x="1" y="5.5" width="20" height="9" rx="2" fill="#3a3a3a"/><rect x="5.5" y="11" width="11" height="7" fill="#fff" stroke="#3a3a3a" stroke-width="2"/><circle cx="17.5" cy="8.3" r="1" fill="#fff"/></svg><svg style="position:absolute;left:2516.00px;top:830.10px;" width="23" height="20" viewBox="0 0 23 20"><rect x="7" y="1" width="15" height="18" rx="1" fill="none" stroke="#3a3a3a" stroke-width="1.9"/><path d="M13.5,1 V19 M7,6.8 H22 M7,12.8 H22" stroke="#3a3a3a" stroke-width="1.7"/><rect x="0.5" y="4.5" width="12" height="12" fill="#3a3a3a"/><path d="M3.3,7.3 L9.7,13.7 M9.7,7.3 L3.3,13.7" stroke="#fff" stroke-width="1.6"/></svg><svg style="position:absolute;left:2517.00px;top:870.40px;" width="20" height="18" viewBox="0 0 20 18"><rect x="1.2" y="1.2" width="17.6" height="15.6" rx="1.5" fill="none" stroke="#3a3a3a" stroke-width="2.4"/><rect x="1.2" y="1.2" width="17.6" height="4" fill="#3a3a3a"/><path d="M10,3 V17 M1,10.5 H19" stroke="#3a3a3a" stroke-width="2"/></svg><svg style="position:absolute;left:2516.00px;top:908.70px;" width="22" height="21" viewBox="0 0 22 21"><rect x="1" y="1" width="20" height="14" rx="1" fill="none" stroke="#3a3a3a" stroke-width="2"/><path d="M5,7 V5 H7.5 M17,9 V11 H14.5" stroke="#3a3a3a" stroke-width="1.6" fill="none"/><path d="M11,15 V19 M6.5,19.5 H15.5" stroke="#3a3a3a" stroke-width="2.2"/></svg><svg style="position:absolute;left:2516.00px;top:947.00px;" width="24" height="23" viewBox="0 0 24 23"><path d="M1,1.5 H19 L12.5,9.5 V20 L8.5,16.5 V9.5 Z" fill="#fff"/></svg><svg style="position:absolute;left:2529.50px;top:958.00px;" width="12" height="12" viewBox="0 0 12 12"><rect x="4.29" y="0.3" width="2.42" height="10.40" rx="0.44" fill="#fff" transform="rotate(0 5.50 5.50)"/><rect x="4.29" y="0.3" width="2.42" height="10.40" rx="0.44" fill="#fff" transform="rotate(45 5.50 5.50)"/><rect x="4.29" y="0.3" width="2.42" height="10.40" rx="0.44" fill="#fff" transform="rotate(90 5.50 5.50)"/><rect x="4.29" y="0.3" width="2.42" height="10.40" rx="0.44" fill="#fff" transform="rotate(135 5.50 5.50)"/><circle cx="5.50" cy="5.50" r="3.96" fill="#fff"/><circle cx="5.50" cy="5.50" r="1.65" fill="#2563eb"/></svg>
</div></body></html>
